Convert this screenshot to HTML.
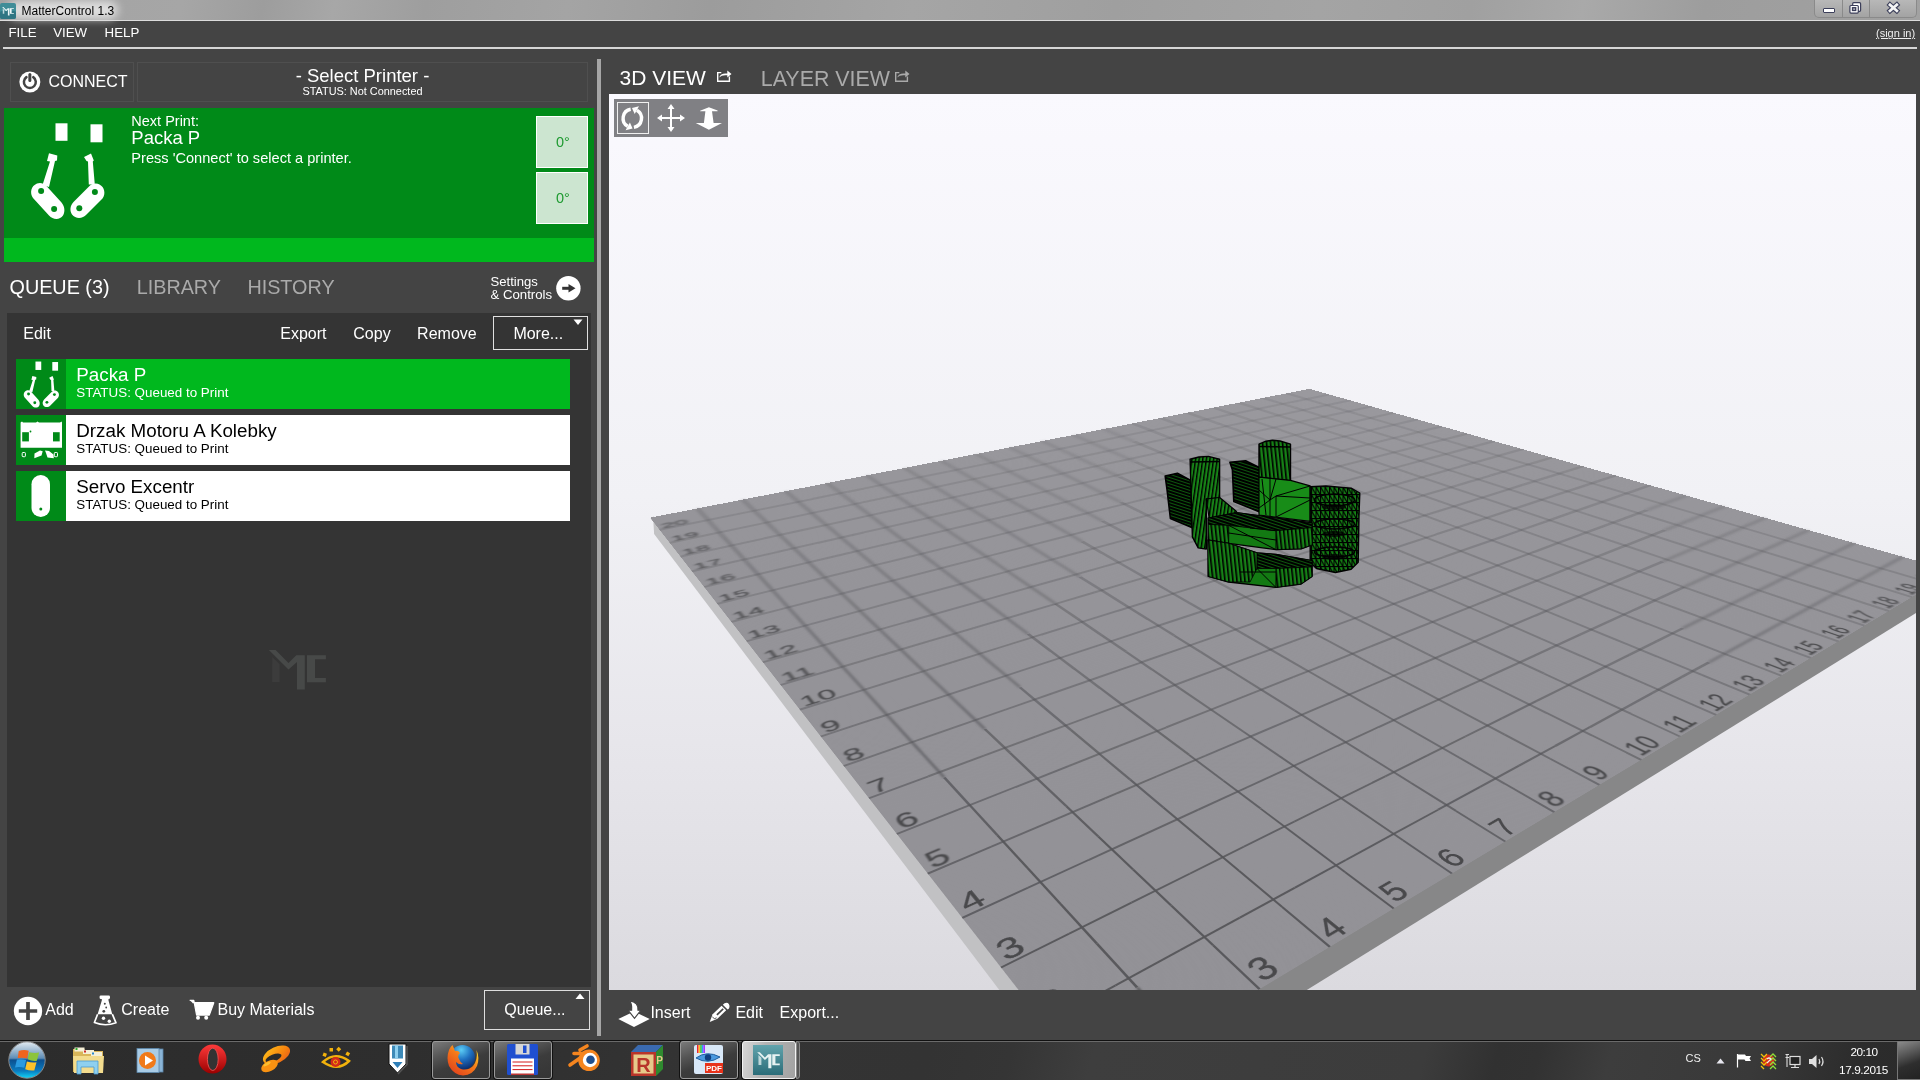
<!DOCTYPE html><html><head><meta charset="utf-8"><style>
*{margin:0;padding:0;box-sizing:border-box}
html,body{width:1920px;height:1080px;overflow:hidden}
body{background:#444;font-family:"Liberation Sans",sans-serif;position:relative;color:#fff}
.a{position:absolute;white-space:pre;line-height:1}
.t{position:absolute;white-space:pre;line-height:1}
svg{position:absolute;overflow:visible}
</style></head><body><div style="position:absolute;left:0;top:0;width:1920px;height:1080px;overflow:hidden;will-change:transform"><div class="a" style="left:0;top:0;width:1920px;height:20px;background:linear-gradient(100deg,#a3a3a3 0px,#a6a6a6 180px,#9d9d9d 260px,#a7a7a7 330px,#9e9e9e 420px,#a4a4a4 560px,#9c9c9c 700px,#a5a5a5 900px,#9f9f9f 1100px,#a4a4a4 1300px,#a0a0a0 1450px,#a9a9a9 1560px,#9d9d9d 1680px,#a2a2a2 1920px)"></div>
<div class="a" style="left:8px;top:1px;width:110px;height:18px;border-radius:9px;background:#dedede;filter:blur(4px)"></div>
<div class="a" style="left:0;top:20px;width:1920px;height:1px;background:#dcdcdc"></div>
<svg style="left:0;top:3px" width="17" height="16" viewBox="0 0 17 16"><rect x="0" y="0" width="16" height="16" rx="2" fill="#3f8d98"/><rect x="0" y="8" width="16" height="8" rx="2" fill="#2f7683"/></svg>
<svg style="left:2px;top:6.5px" width="12" height="8.5" viewBox="268.5 649.5 58 40.5" preserveAspectRatio="none"><g fill="#eef8f8"><path d="M272.2 657 L279.6 664.1 L279.6 681.9 L272.2 681.9 Z" fill-opacity="0.75"/><path d="M268.9 650 L275.6 650 L288.5 663 L296.3 655.2 L304.8 655.2 L304.8 689.6 L297 689.6 L297 661.9 L288.5 669.6 Z"/><path d="M307 655.2 L325.9 655.2 L325.9 659.3 L315 659.3 L315 678 L325.9 678 L325.9 682.2 L307 682.2 Z"/></g></svg>
<div class="t" style="left:21.5px;top:4.96px;font-size:12px;color:#000;">MatterControl 1.3</div>
<div class="a" style="left:1814px;top:-1px;width:103px;height:19px;border:1px solid #8a8a8a;border-top:none;border-radius:0 0 5px 5px;background:linear-gradient(#b9b9b9,#a3a3a3)"></div>
<div class="a" style="left:1842px;top:0;width:1px;height:17px;background:#8a8a8a"></div>
<div class="a" style="left:1869px;top:0;width:1px;height:17px;background:#8a8a8a"></div>
<div class="a" style="left:1823px;top:8px;width:12px;height:5px;background:#fff;border:1px solid #3c3f5a;border-radius:1px"></div>
<svg style="left:1840px;top:0" width="80" height="20" viewBox="1840 0 80 20">
<rect x="1852.7" y="2.7" width="7.9" height="8.6" rx="1" fill="#fff" stroke="#3c3f5a" stroke-width="1.2"/>
<rect x="1849.9" y="5.5" width="8.4" height="7.6" rx="1" fill="#fff" stroke="#3c3f5a" stroke-width="1.2"/>
<rect x="1852.6" y="7.8" width="3" height="2.6" fill="none" stroke="#3c3f5a" stroke-width="1.5"/>
<path d="M1890 4.8 L1896.8 10.8 M1896.8 4.8 L1890 10.8" stroke="#3c3f5a" stroke-width="5" stroke-linecap="square"/>
<path d="M1890 4.8 L1896.8 10.8 M1896.8 4.8 L1890 10.8" stroke="#f4f4f4" stroke-width="2.8" stroke-linecap="square"/>
</svg>
<div class="t" style="left:8.5px;top:25.99px;font-size:13.3px;color:#fff;">FILE</div>
<div class="t" style="left:53.2px;top:25.99px;font-size:13.3px;color:#fff;">VIEW</div>
<div class="t" style="left:104.6px;top:25.99px;font-size:13.3px;color:#fff;">HELP</div>
<div class="t" style="left:1876px;top:28.48px;font-size:11px;color:#eee;text-decoration:underline">(sign in)</div>
<div class="a" style="left:3px;top:47px;width:1914px;height:2px;background:#d6d6d6"></div>
<div class="a" style="left:10px;top:62px;width:124px;height:40px;border:1px solid #4f4f4f"></div>
<div class="a" style="left:137px;top:62px;width:451px;height:40px;border:1px solid #4f4f4f"></div>
<svg style="left:0;top:0" width="50" height="100" viewBox="0 0 50 100"><circle cx="29.85" cy="82" r="10.5" fill="#fff"/><path d="M26.44 77.13 A5.95 5.95 0 1 0 33.26 77.13" fill="none" stroke="#444" stroke-width="2.5" stroke-linecap="round"/><path d="M29.85 74.4 V80.6" stroke="#444" stroke-width="3" stroke-linecap="round"/></svg>
<div class="t" style="left:48.5px;top:73.88px;font-size:16px;color:#fff;">CONNECT</div>
<div class="t" style="left:137px;width:451px;top:66.58px;font-size:18.5px;text-align:center">- Select Printer -</div>
<div class="t" style="left:137px;width:451px;top:86.06px;font-size:10.9px;text-align:center">STATUS: Not Connected</div>
<div class="a" style="left:4px;top:108px;width:590px;height:130px;background:#008a18"></div>
<div class="a" style="left:4px;top:238px;width:590px;height:24px;background:#00b81e"></div>
<div class="t" style="left:131.3px;top:114.11px;font-size:14.5px;color:#fff;">Next Print:</div>
<div class="t" style="left:131.3px;top:128.53px;font-size:18.5px;color:#fff;">Packa P</div>
<div class="t" style="left:131.3px;top:150.93px;font-size:14.6px;color:#fff;">Press 'Connect' to select a printer.</div>
<div class="a" style="left:536px;top:116px;width:52px;height:52px;background:#cce5d0;border:1px solid #fff"></div>
<div class="t" style="left:556px;top:135.11px;font-size:14.5px;color:#1e9a30;">0°</div>
<div class="a" style="left:536px;top:172px;width:52px;height:52px;background:#cce5d0;border:1px solid #fff"></div>
<div class="t" style="left:556px;top:191.11px;font-size:14.5px;color:#1e9a30;">0°</div>
<svg style="left:0;top:0" width="120" height="240"><g fill="#fff">
<rect x="55.5" y="123.3" width="12" height="17.5"/>
<rect x="90.5" y="124.3" width="12" height="18"/>
<path d="M49 153.3 L57.3 155.5 L57 160.5 L55 161 L49 187 L42.5 185 L50 161.5 L47 161 Z"/>
<path d="M91 153.6 L84 157 L86.5 161 L88 161.5 L88.8 184.5 L94.8 184.5 L92.8 161.5 L93.8 160.5 Z"/>
<path d="M37 183.5 C31 186 29.5 193 33 198 L49 215.5 C53 220 60 220 63 215.5 C65.5 211.5 64.5 206 61.5 202.5 L46 185.5 C43.5 183 40 182.3 37 183.5 Z"/>
<path d="M99.5 184.5 C104.5 187 106 194 102.5 198.5 L86.5 214.5 C82.5 219 75.5 219 72 214.5 C69.5 211 70 205.5 73.5 202 L89.5 186 C92.5 183.3 96.5 183 99.5 184.5 Z"/>
</g>
<g fill="#008a18"><circle cx="41.1" cy="190.9" r="3"/><circle cx="54.1" cy="208.9" r="3"/><circle cx="94.9" cy="192" r="3"/><circle cx="79.3" cy="208.2" r="3"/></g></svg>
<div class="t" style="left:9.5px;top:278.46px;font-size:19.8px;color:#fff;">QUEUE (3)</div>
<div class="t" style="left:136.7px;top:278.46px;font-size:19.8px;color:#aaaaaa;">LIBRARY</div>
<div class="t" style="left:247.4px;top:278.46px;font-size:19.8px;color:#aaaaaa;">HISTORY</div>
<div class="t" style="left:490.5px;top:275.26px;font-size:13.1px;color:#fff;">Settings</div>
<div class="t" style="left:490.5px;top:287.98px;font-size:13.2px;color:#fff;">&amp; Controls</div>
<svg style="left:0;top:0" width="600" height="320"><circle cx="568.4" cy="288.25" r="12.2" fill="#fff"/><path d="M562.2 288.3 H570" stroke="#333" stroke-width="3"/><path d="M568.5 284 L575.5 288.3 L568.5 292.6 Z" fill="#333"/></svg>
<div class="a" style="left:7px;top:313px;width:584px;height:674px;background:#343434"></div>
<div class="t" style="left:23.3px;top:325.88px;font-size:16px;color:#fff;">Edit</div>
<div class="t" style="left:280.3px;top:325.88px;font-size:16px;color:#fff;">Export</div>
<div class="t" style="left:353.3px;top:325.88px;font-size:16px;color:#fff;">Copy</div>
<div class="t" style="left:417.1px;top:325.88px;font-size:16px;color:#fff;">Remove</div>
<div class="a" style="left:493px;top:316px;width:95px;height:34px;border:1px solid #e0e0e0"></div>
<div class="t" style="left:513.4px;top:325.88px;font-size:16px;color:#fff;">More...</div>
<svg style="left:573px;top:319px" width="10" height="7"><path d="M0.5 0.5 H9.5 L5 6 Z" fill="#fff"/></svg>
<div class="a" style="left:16px;top:359px;width:554px;height:50px;background:#00b81e"></div><div class="a" style="left:16px;top:359px;width:50px;height:50px;background:#008a18"></div><svg style="left:16px;top:359px" width="50" height="50" viewBox="26 118 82 104"><g transform="translate(0,0)"><g fill="#fff">
<rect x="55.5" y="123.3" width="12" height="17.5"/>
<rect x="90.5" y="124.3" width="12" height="18"/>
<path d="M49 153.3 L57.3 155.5 L57 160.5 L55 161 L49 187 L42.5 185 L50 161.5 L47 161 Z"/>
<path d="M91 153.6 L84 157 L86.5 161 L88 161.5 L88.8 184.5 L94.8 184.5 L92.8 161.5 L93.8 160.5 Z"/>
<path d="M37 183.5 C31 186 29.5 193 33 198 L49 215.5 C53 220 60 220 63 215.5 C65.5 211.5 64.5 206 61.5 202.5 L46 185.5 C43.5 183 40 182.3 37 183.5 Z"/>
<path d="M99.5 184.5 C104.5 187 106 194 102.5 198.5 L86.5 214.5 C82.5 219 75.5 219 72 214.5 C69.5 211 70 205.5 73.5 202 L89.5 186 C92.5 183.3 96.5 183 99.5 184.5 Z"/>
</g>
<g fill="#008a18"><circle cx="41.1" cy="190.9" r="3"/><circle cx="54.1" cy="208.9" r="3"/><circle cx="94.9" cy="192" r="3"/><circle cx="79.3" cy="208.2" r="3"/></g></g></svg><div class="t" style="left:76.3px;top:366.28px;font-size:18.8px;color:#fff;">Packa P</div><div class="t" style="left:76.3px;top:386.21px;font-size:13.4px;color:#fff;">STATUS: Queued to Print</div>
<div class="a" style="left:16px;top:415px;width:554px;height:50px;background:#ffffff"></div><div class="a" style="left:16px;top:415px;width:50px;height:50px;background:#008a18"></div><svg style="left:16px;top:415px" width="50" height="50" viewBox="0 0 50 50">
<path d="M4.6 7.4 L6 6.5 L7 7.4 L20 7.4 L21.5 6.6 L23 7.4 L44 7.4 L45.5 6.5 L46 7.4 V32.8 H4.6 Z" fill="#fff"/>
<rect x="6.2" y="17.2" width="6.7" height="9.2" fill="#008a18"/><rect x="37" y="17.2" width="6.7" height="9.2" fill="#008a18"/>
<circle cx="14.5" cy="16.5" r="0.9" fill="#008a18"/>
<rect x="6.2" y="37.5" width="3.2" height="4.2" rx="0.8" fill="none" stroke="#fff" stroke-width="1"/>
<rect x="38.3" y="37.5" width="3.2" height="4.2" rx="0.8" fill="none" stroke="#fff" stroke-width="1"/>
<path d="M18.3 43.2 L18.5 38.5 L24 35.5 L26.7 36.2 L25.5 40.5 Z" fill="#fff"/><path d="M29 35.5 L33 36 L37.5 39.5 L37.8 43.2 L31.5 42.5 L30 38 Z" fill="#fff"/>
</svg><div class="t" style="left:76.3px;top:422.28px;font-size:18.8px;color:#000;">Drzak Motoru A Kolebky</div><div class="t" style="left:76.3px;top:442.21px;font-size:13.4px;color:#000;">STATUS: Queued to Print</div>
<div class="a" style="left:16px;top:471px;width:554px;height:50px;background:#ffffff"></div><div class="a" style="left:16px;top:471px;width:50px;height:50px;background:#008a18"></div><svg style="left:16px;top:471px" width="50" height="50" viewBox="0 0 50 50">
<rect x="15.5" y="4" width="18.5" height="42" rx="9.2" fill="#fff"/><circle cx="24.8" cy="38" r="1.5" fill="#008a18"/>
</svg><div class="t" style="left:76.3px;top:478.28px;font-size:18.8px;color:#000;">Servo Excentr</div><div class="t" style="left:76.3px;top:498.21px;font-size:13.4px;color:#000;">STATUS: Queued to Print</div>
<svg style="left:0;top:0" width="340" height="700">
<path d="M272.2 657 L279.6 664.1 L279.6 681.9 L272.2 681.9 Z" fill="#3c3c3c"/>
<path d="M268.9 650 L275.6 650 L288.5 663 L296.3 655.2 L304.8 655.2 L304.8 689.6 L297 689.6 L297 661.9 L288.5 669.6 Z" fill="#474948"/>
<path d="M307 655.2 L325.9 655.2 L325.9 659.3 L315 659.3 L315 678 L325.9 678 L325.9 682.2 L307 682.2 Z" fill="#474948"/>
</svg>
<svg style="left:12.6px;top:996px" width="30" height="30" viewBox="0 0 30 30"><circle cx="15" cy="15" r="14.2" fill="#fff"/><path d="M15 6 V24 M5.8 15 H24.2" stroke="#444" stroke-width="3.7"/></svg>
<div class="t" style="left:45.3px;top:1001.88px;font-size:16px;color:#fff;">Add</div>
<svg style="left:0;top:0" width="230" height="1035" viewBox="0 0 230 1035">
<rect x="99.6" y="995.6" width="10.4" height="3.4" rx="1.2" fill="#fff"/>
<path d="M101.8 998.5 H108.5 V1000.5 L112.3 1014.2 H97.6 L101.8 1000.5 Z" fill="#fff"/>
<path d="M97.6 1014.2 L94.4 1022.5 Q105 1026.8 116 1022.8 L112.3 1014.2" fill="none" stroke="#fff" stroke-width="1.7" stroke-linejoin="round"/>
<circle cx="104.8" cy="1003.7" r="1" fill="#444"/><circle cx="106.2" cy="1007.5" r="0.9" fill="#444"/><circle cx="103.8" cy="1011.3" r="1.4" fill="#444"/>
<circle cx="103.5" cy="1018.2" r="1.7" fill="#fff"/><circle cx="109.3" cy="1021.3" r="1.7" fill="#fff"/>
<path d="M189.7 1000.3 H193.8 L196.6 1015.1 H209.3 L213.8 1002.7 H192.5" fill="#fff" stroke="#fff" stroke-width="1.2" stroke-linejoin="round"/>
<circle cx="198" cy="1017.8" r="2" fill="#fff"/><circle cx="206.2" cy="1017.8" r="2" fill="#fff"/>
</svg>
<div class="t" style="left:121.3px;top:1001.88px;font-size:16px;color:#fff;">Create</div>
<div class="t" style="left:217.5px;top:1001.88px;font-size:16px;color:#fff;">Buy Materials</div>
<div class="a" style="left:484px;top:990px;width:106px;height:40px;border:1px solid #dedede"></div>
<div class="t" style="left:504.2px;top:1002.38px;font-size:16px;color:#fff;">Queue...</div>
<svg style="left:575px;top:993px" width="10" height="7"><path d="M0.5 6 H9.5 L5 0.5 Z" fill="#fff"/></svg>
<div class="a" style="left:597px;top:59px;width:4px;height:977px;background:#a6a6a6"></div>
<div class="t" style="left:619.5px;top:67.38px;font-size:21px;color:#fff;">3D VIEW</div>
<div class="t" style="left:760.8px;top:68.85px;font-size:21.4px;color:#aaaaaa;">LAYER VIEW</div>
<svg style="left:717px;top:69.6px" width="16" height="13" viewBox="0 0 16 13"><path d="M4.3 2.6 H0.7 V11.3 H12.4 V6.6" fill="none" stroke="#fff" stroke-width="1.4"/><path d="M2.2 7.6 Q3.5 3.3 8.6 3.4 L10.3 3.4 L10.3 0.4 L14.5 3.9 L10.3 7.5 L10.3 5.3 L8.6 5.3 Q4.5 5.2 2.2 7.6 Z" fill="#fff"/></svg>
<svg style="left:895px;top:69.6px" width="16" height="13" viewBox="0 0 16 13"><path d="M4.3 2.6 H0.7 V11.3 H12.4 V6.6" fill="none" stroke="#aaaaaa" stroke-width="1.4"/><path d="M2.2 7.6 Q3.5 3.3 8.6 3.4 L10.3 3.4 L10.3 0.4 L14.5 3.9 L10.3 7.5 L10.3 5.3 L8.6 5.3 Q4.5 5.2 2.2 7.6 Z" fill="#aaaaaa"/></svg>
<div class="a" style="left:609px;top:94px;width:1307px;height:896px;overflow:hidden;background:linear-gradient(#faf9fe 0%,#f1f1f5 45%,#e6e5ea 75%,#dbdadf 100%)"><svg style="left:0;top:0" width="1307" height="896"><polygon points="44.00,422.10 45.10,440.00 488.40,1025.60 489.00,991.50" fill="#c1c1c3"/><polygon points="486.00,991.50 488.40,1025.60 1351.00,491.75 1345.60,475.00" fill="#878788"/><polygon points="43.50,424.10 700.50,297.00 1342.60,477.50 486.00,991.00" fill="#949398"/></svg><div class="a" style="left:0;top:0;width:2000px;height:2000px;transform-origin:0 0;transform:matrix3d(0.49396048,0.00474350,0,0.0002344999,0.08033936,-0.00551094,0,-0.0002924296,0,0,1,0,41.080434,423.669994,0,1.00000000)"><svg width="2000" height="2000" viewBox="0 0 2000 2000" style="left:0;top:0"><defs><linearGradient id="pg" x1="1" y1="0" x2="0" y2="1"><stop offset="0" stop-color="#9a999e"/><stop offset="1" stop-color="#929196"/></linearGradient></defs><rect width="2000" height="2000" fill="url(#pg)"/><g font-family="Liberation Sans" font-size="48" fill="#48484c" stroke="#48484c" stroke-width="0.4"><defs><filter id="lb2_8" x="-20%" y="-20%" width="140%" height="140%"><feGaussianBlur stdDeviation="0.42"/></filter><filter id="lb2_108" x="-20%" y="-20%" width="140%" height="140%"><feGaussianBlur stdDeviation="0.33"/></filter><filter id="lb3_8" x="-20%" y="-20%" width="140%" height="140%"><feGaussianBlur stdDeviation="0.56"/></filter><filter id="lb3_208" x="-20%" y="-20%" width="140%" height="140%"><feGaussianBlur stdDeviation="0.36"/></filter><filter id="lb4_8" x="-20%" y="-20%" width="140%" height="140%"><feGaussianBlur stdDeviation="0.70"/></filter><filter id="lb4_308" x="-20%" y="-20%" width="140%" height="140%"><feGaussianBlur stdDeviation="0.40"/></filter><filter id="lb5_8" x="-20%" y="-20%" width="140%" height="140%"><feGaussianBlur stdDeviation="0.85"/></filter><filter id="lb5_408" x="-20%" y="-20%" width="140%" height="140%"><feGaussianBlur stdDeviation="0.50"/></filter><filter id="lb6_8" x="-20%" y="-20%" width="140%" height="140%"><feGaussianBlur stdDeviation="1.01"/></filter><filter id="lb6_508" x="-20%" y="-20%" width="140%" height="140%"><feGaussianBlur stdDeviation="0.60"/></filter><filter id="lb7_8" x="-20%" y="-20%" width="140%" height="140%"><feGaussianBlur stdDeviation="1.18"/></filter><filter id="lb7_608" x="-20%" y="-20%" width="140%" height="140%"><feGaussianBlur stdDeviation="0.70"/></filter><filter id="lb8_8" x="-20%" y="-20%" width="140%" height="140%"><feGaussianBlur stdDeviation="1.36"/></filter><filter id="lb8_708" x="-20%" y="-20%" width="140%" height="140%"><feGaussianBlur stdDeviation="0.81"/></filter><filter id="lb9_8" x="-20%" y="-20%" width="140%" height="140%"><feGaussianBlur stdDeviation="1.54"/></filter><filter id="lb9_808" x="-20%" y="-20%" width="140%" height="140%"><feGaussianBlur stdDeviation="0.93"/></filter><filter id="lb10_8" x="-20%" y="-20%" width="140%" height="140%"><feGaussianBlur stdDeviation="1.74"/></filter><filter id="lb10_908" x="-20%" y="-20%" width="140%" height="140%"><feGaussianBlur stdDeviation="1.04"/></filter><filter id="lb11_8" x="-20%" y="-20%" width="140%" height="140%"><feGaussianBlur stdDeviation="1.94"/></filter><filter id="lb11_1008" x="-20%" y="-20%" width="140%" height="140%"><feGaussianBlur stdDeviation="1.17"/></filter><filter id="lb12_8" x="-20%" y="-20%" width="140%" height="140%"><feGaussianBlur stdDeviation="2.15"/></filter><filter id="lb12_1108" x="-20%" y="-20%" width="140%" height="140%"><feGaussianBlur stdDeviation="1.29"/></filter><filter id="lb13_8" x="-20%" y="-20%" width="140%" height="140%"><feGaussianBlur stdDeviation="2.37"/></filter><filter id="lb13_1208" x="-20%" y="-20%" width="140%" height="140%"><feGaussianBlur stdDeviation="1.42"/></filter><filter id="lb14_8" x="-20%" y="-20%" width="140%" height="140%"><feGaussianBlur stdDeviation="2.60"/></filter><filter id="lb14_1308" x="-20%" y="-20%" width="140%" height="140%"><feGaussianBlur stdDeviation="1.56"/></filter><filter id="lb15_8" x="-20%" y="-20%" width="140%" height="140%"><feGaussianBlur stdDeviation="2.83"/></filter><filter id="lb15_1408" x="-20%" y="-20%" width="140%" height="140%"><feGaussianBlur stdDeviation="1.70"/></filter><filter id="lb16_8" x="-20%" y="-20%" width="140%" height="140%"><feGaussianBlur stdDeviation="3.07"/></filter><filter id="lb16_1508" x="-20%" y="-20%" width="140%" height="140%"><feGaussianBlur stdDeviation="1.85"/></filter><filter id="lb17_8" x="-20%" y="-20%" width="140%" height="140%"><feGaussianBlur stdDeviation="3.33"/></filter><filter id="lb17_1608" x="-20%" y="-20%" width="140%" height="140%"><feGaussianBlur stdDeviation="1.99"/></filter><filter id="lb18_8" x="-20%" y="-20%" width="140%" height="140%"><feGaussianBlur stdDeviation="3.59"/></filter><filter id="lb18_1708" x="-20%" y="-20%" width="140%" height="140%"><feGaussianBlur stdDeviation="2.15"/></filter><filter id="lb19_8" x="-20%" y="-20%" width="140%" height="140%"><feGaussianBlur stdDeviation="3.86"/></filter><filter id="lb19_1808" x="-20%" y="-20%" width="140%" height="140%"><feGaussianBlur stdDeviation="2.31"/></filter><filter id="lb20_8" x="-20%" y="-20%" width="140%" height="140%"><feGaussianBlur stdDeviation="4.13"/></filter><filter id="lb20_1908" x="-20%" y="-20%" width="140%" height="140%"><feGaussianBlur stdDeviation="2.47"/></filter></defs><text x="8" y="1995">1</text><text x="8" y="1995">1</text><text x="8" y="1895" filter="url(#lb2_8)">2</text><text x="108" y="1995" filter="url(#lb2_108)">2</text><text x="8" y="1795" filter="url(#lb3_8)">3</text><text x="208" y="1995" filter="url(#lb3_208)">3</text><text x="8" y="1695" filter="url(#lb4_8)">4</text><text x="308" y="1995" filter="url(#lb4_308)">4</text><text x="8" y="1595" filter="url(#lb5_8)">5</text><text x="408" y="1995" filter="url(#lb5_408)">5</text><text x="8" y="1495" filter="url(#lb6_8)">6</text><text x="508" y="1995" filter="url(#lb6_508)">6</text><text x="8" y="1395" filter="url(#lb7_8)">7</text><text x="608" y="1995" filter="url(#lb7_608)">7</text><text x="8" y="1295" filter="url(#lb8_8)">8</text><text x="708" y="1995" filter="url(#lb8_708)">8</text><text x="8" y="1195" filter="url(#lb9_8)">9</text><text x="808" y="1995" filter="url(#lb9_808)">9</text><text x="8" y="1095" filter="url(#lb10_8)">10</text><text x="908" y="1995" filter="url(#lb10_908)">10</text><text x="8" y="995" filter="url(#lb11_8)">11</text><text x="1008" y="1995" filter="url(#lb11_1008)">11</text><text x="8" y="895" filter="url(#lb12_8)">12</text><text x="1108" y="1995" filter="url(#lb12_1108)">12</text><text x="8" y="795" filter="url(#lb13_8)">13</text><text x="1208" y="1995" filter="url(#lb13_1208)">13</text><text x="8" y="695" filter="url(#lb14_8)">14</text><text x="1308" y="1995" filter="url(#lb14_1308)">14</text><text x="8" y="595" filter="url(#lb15_8)">15</text><text x="1408" y="1995" filter="url(#lb15_1408)">15</text><text x="8" y="495" filter="url(#lb16_8)">16</text><text x="1508" y="1995" filter="url(#lb16_1508)">16</text><text x="8" y="395" filter="url(#lb17_8)">17</text><text x="1608" y="1995" filter="url(#lb17_1608)">17</text><text x="8" y="295" filter="url(#lb18_8)">18</text><text x="1708" y="1995" filter="url(#lb18_1708)">18</text><text x="8" y="195" filter="url(#lb19_8)">19</text><text x="1808" y="1995" filter="url(#lb19_1808)">19</text><text x="8" y="95" filter="url(#lb20_8)">20</text><text x="1908" y="1995" filter="url(#lb20_1908)">20</text></g></svg></div><svg style="left:0;top:0" width="1307" height="896"><g fill="#56565a" style="filter:blur(0.45px)"><polygon points="334.09,683.92 359.48,711.65 362.07,710.63 336.62,682.97" fill-opacity="0.771"/><polygon points="359.59,711.61 387.20,741.75 389.63,740.73 361.96,710.67" fill-opacity="0.842"/><polygon points="387.30,741.71 417.42,774.59 419.70,773.57 389.52,740.78" fill-opacity="0.925"/><polygon points="417.45,774.58 450.44,810.59 452.71,809.51 419.67,773.59" fill-opacity="0.950"/><polygon points="450.44,810.59 486.73,850.21 489.06,849.01 452.71,809.51" fill-opacity="0.950"/><polygon points="486.73,850.21 526.84,894.01 529.24,892.68 489.06,849.01" fill-opacity="0.950"/><polygon points="49.94,435.02 90.44,426.85 91.89,428.48 51.25,436.71" fill-opacity="0.212"/><polygon points="90.42,426.84 129.36,418.98 130.97,420.58 91.91,428.49" fill-opacity="0.208"/><polygon points="129.34,418.97 166.80,411.41 168.56,412.98 130.98,420.59" fill-opacity="0.204"/><polygon points="166.78,411.40 202.85,404.13 204.75,405.66 168.58,412.99" fill-opacity="0.200"/><polygon points="202.83,404.11 237.58,397.10 239.62,398.61 204.77,405.67" fill-opacity="0.196"/><polygon points="237.56,397.09 271.06,390.33 273.23,391.82 239.64,398.63" fill-opacity="0.193"/><polygon points="271.04,390.32 303.36,383.80 305.66,385.26 273.25,391.83" fill-opacity="0.189"/><polygon points="303.34,383.79 334.54,377.50 336.97,378.93 305.68,385.27" fill-opacity="0.186"/><polygon points="334.52,377.49 364.66,371.41 367.21,372.82 336.99,378.94" fill-opacity="0.183"/><polygon points="364.63,371.40 393.76,365.53 396.43,366.91 367.23,372.83" fill-opacity="0.180"/><polygon points="393.74,365.51 421.91,359.84 424.69,361.20 396.45,366.92" fill-opacity="0.177"/><polygon points="421.89,359.82 449.15,354.33 452.04,355.67 424.71,361.21" fill-opacity="0.174"/><polygon points="449.12,354.32 475.51,349.00 478.51,350.32 452.06,355.68" fill-opacity="0.171"/><polygon points="475.49,348.99 501.05,343.83 504.15,345.13 478.53,350.33" fill-opacity="0.168"/><polygon points="501.03,343.82 525.80,338.83 529.00,340.11 504.17,345.14" fill-opacity="0.166"/><polygon points="525.78,338.82 549.80,333.98 553.09,335.24 529.02,340.12" fill-opacity="0.163"/><polygon points="549.77,333.97 573.07,329.27 576.46,330.51 553.11,335.25" fill-opacity="0.161"/><polygon points="573.05,329.27 595.66,324.71 599.13,325.93 576.48,330.52" fill-opacity="0.158"/><polygon points="595.63,324.70 617.59,320.27 621.15,321.48 599.16,325.94" fill-opacity="0.156"/><polygon points="617.56,320.27 638.89,315.97 642.54,317.15 621.18,321.49" fill-opacity="0.154"/><polygon points="638.86,315.96 659.58,311.78 663.32,312.95 642.56,317.16" fill-opacity="0.151"/><polygon points="659.55,311.77 679.70,307.71 683.52,308.87 663.35,312.96" fill-opacity="0.149"/><polygon points="679.65,307.70 699.24,303.75 703.19,304.91 683.58,308.89" fill-opacity="0.145"/><polygon points="699.18,303.73 718.24,299.89 722.33,301.05 703.25,304.92" fill-opacity="0.141"/><polygon points="374.63,635.59 399.66,659.37 402.35,658.36 377.26,634.65" fill-opacity="0.669"/><polygon points="399.77,659.33 426.81,685.00 429.35,684.00 402.25,658.40" fill-opacity="0.727"/><polygon points="426.91,684.96 456.22,712.78 458.60,711.78 429.24,684.04" fill-opacity="0.792"/><polygon points="456.32,712.74 488.18,742.98 490.41,741.99 458.50,711.83" fill-opacity="0.865"/><polygon points="488.28,742.94 523.05,775.94 525.13,774.94 490.32,742.03" fill-opacity="0.949"/><polygon points="523.05,775.94 561.14,812.08 563.27,810.99 525.13,774.94" fill-opacity="0.950"/><polygon points="561.14,812.08 603.05,851.85 605.22,850.65 563.27,810.99" fill-opacity="0.950"/><polygon points="603.05,851.85 649.38,895.82 651.59,894.49 605.22,850.65" fill-opacity="0.950"/><polygon points="60.04,447.98 101.57,439.30 103.02,440.91 61.36,449.66" fill-opacity="0.226"/><polygon points="101.56,439.28 141.44,430.94 143.04,432.53 103.04,440.93" fill-opacity="0.221"/><polygon points="141.42,430.93 179.74,422.92 181.49,424.47 143.05,432.55" fill-opacity="0.217"/><polygon points="179.72,422.90 216.58,415.20 218.47,416.73 181.51,424.49" fill-opacity="0.213"/><polygon points="216.56,415.19 252.03,407.77 254.06,409.27 218.49,416.74" fill-opacity="0.209"/><polygon points="252.01,407.76 286.17,400.62 288.33,402.09 254.08,409.29" fill-opacity="0.205"/><polygon points="286.15,400.61 319.08,393.73 321.36,395.17 288.35,402.10" fill-opacity="0.201"/><polygon points="319.05,393.71 350.81,387.08 353.22,388.50 321.38,395.18" fill-opacity="0.197"/><polygon points="350.79,387.07 381.43,380.66 383.96,382.06 353.24,388.51" fill-opacity="0.194"/><polygon points="381.41,380.65 411.00,374.47 413.65,375.84 383.98,382.07" fill-opacity="0.191"/><polygon points="410.98,374.46 439.58,368.48 442.33,369.83 413.67,375.85" fill-opacity="0.187"/><polygon points="439.55,368.47 467.20,362.69 470.06,364.02 442.35,369.84" fill-opacity="0.184"/><polygon points="467.17,362.68 493.92,357.10 496.88,358.40 470.08,364.03" fill-opacity="0.181"/><polygon points="493.89,357.09 519.78,351.68 522.84,352.96 496.90,358.41" fill-opacity="0.178"/><polygon points="519.75,351.67 544.82,346.43 547.98,347.70 522.86,352.97" fill-opacity="0.175"/><polygon points="544.79,346.42 569.08,341.35 572.33,342.59 548.00,347.71" fill-opacity="0.173"/><polygon points="569.05,341.34 592.59,336.42 595.94,337.65 572.36,342.60" fill-opacity="0.170"/><polygon points="592.57,336.41 615.40,331.64 618.83,332.85 595.96,337.66" fill-opacity="0.167"/><polygon points="615.37,331.64 637.53,327.01 641.04,328.20 618.86,332.86" fill-opacity="0.165"/><polygon points="637.50,327.00 659.00,322.51 662.61,323.68 641.07,328.21" fill-opacity="0.162"/><polygon points="658.98,322.50 679.86,318.14 683.54,319.30 662.63,323.69" fill-opacity="0.160"/><polygon points="679.80,318.12 700.09,313.89 703.91,315.04 683.60,319.31" fill-opacity="0.155"/><polygon points="700.04,313.87 719.76,309.75 723.71,310.91 703.97,315.06" fill-opacity="0.151"/><polygon points="719.70,309.73 738.87,305.73 742.97,306.89 723.77,310.93" fill-opacity="0.147"/><polygon points="409.65,593.82 434.18,614.43 436.98,613.43 412.39,592.89" fill-opacity="0.586"/><polygon points="434.28,614.39 460.64,636.53 463.29,635.54 436.88,613.47" fill-opacity="0.632"/><polygon points="460.74,636.49 489.13,660.34 491.63,659.35 463.19,635.58" fill-opacity="0.684"/><polygon points="489.23,660.30 519.91,686.06 522.26,685.07 491.53,659.39" fill-opacity="0.742"/><polygon points="520.00,686.02 553.25,713.93 555.45,712.94 522.16,685.11" fill-opacity="0.807"/><polygon points="553.34,713.88 589.49,744.23 591.55,743.24 555.36,712.98" fill-opacity="0.881"/><polygon points="589.56,744.19 629.01,777.30 630.96,776.30 591.47,743.28" fill-opacity="0.950"/><polygon points="629.01,777.30 672.24,813.58 674.22,812.48 630.96,776.30" fill-opacity="0.950"/><polygon points="672.24,813.58 719.81,853.50 721.81,852.29 674.22,812.48" fill-opacity="0.950"/><polygon points="70.80,461.76 113.41,452.52 114.85,454.13 72.11,463.44" fill-opacity="0.241"/><polygon points="113.39,452.50 154.26,443.64 155.85,445.22 114.86,454.15" fill-opacity="0.236"/><polygon points="154.24,443.62 193.46,435.12 195.20,436.66 155.87,445.23" fill-opacity="0.232"/><polygon points="193.44,435.10 231.12,426.93 233.00,428.45 195.22,436.68" fill-opacity="0.227"/><polygon points="231.10,426.92 267.32,419.06 269.33,420.55 233.01,428.46" fill-opacity="0.222"/><polygon points="267.30,419.05 302.14,411.49 304.29,412.95 269.35,420.56" fill-opacity="0.218"/><polygon points="302.12,411.48 335.67,404.20 337.94,405.63 304.31,412.96" fill-opacity="0.214"/><polygon points="335.65,404.19 367.97,397.18 370.36,398.59 337.96,405.65" fill-opacity="0.210"/><polygon points="367.95,397.17 399.11,390.41 401.62,391.79 370.38,398.60" fill-opacity="0.206"/><polygon points="399.09,390.40 429.15,383.88 431.77,385.24 401.64,391.81" fill-opacity="0.203"/><polygon points="429.13,383.87 458.15,377.58 460.88,378.91 431.80,385.25" fill-opacity="0.199"/><polygon points="458.13,377.56 486.17,371.49 489.00,372.80 460.91,378.92" fill-opacity="0.196"/><polygon points="486.14,371.47 513.24,365.60 516.17,366.89 489.02,372.81" fill-opacity="0.192"/><polygon points="513.22,365.59 539.42,359.91 542.45,361.18 516.20,366.90" fill-opacity="0.189"/><polygon points="539.40,359.90 564.75,354.40 567.88,355.65 542.48,361.19" fill-opacity="0.186"/><polygon points="564.73,354.39 589.28,349.07 592.50,350.30 567.90,355.66" fill-opacity="0.183"/><polygon points="589.25,349.06 613.03,343.91 616.34,345.12 592.52,350.31" fill-opacity="0.180"/><polygon points="613.01,343.90 636.05,338.90 639.44,340.09 616.36,345.13" fill-opacity="0.177"/><polygon points="636.03,338.89 658.37,334.05 661.85,335.22 639.47,340.10" fill-opacity="0.175"/><polygon points="658.34,334.04 680.02,329.34 683.58,330.50 661.87,335.23" fill-opacity="0.172"/><polygon points="679.97,329.33 701.00,324.77 704.69,325.93 683.63,330.52" fill-opacity="0.167"/><polygon points="700.95,324.75 721.37,320.33 725.19,321.48 704.75,325.94" fill-opacity="0.162"/><polygon points="721.31,320.31 741.15,316.01 745.11,317.17 725.25,321.50" fill-opacity="0.157"/><polygon points="741.09,315.99 760.37,311.82 764.47,312.98 745.17,317.19" fill-opacity="0.153"/><polygon points="417.67,540.49 440.11,557.39 443.18,556.40 420.68,539.56" fill-opacity="0.482"/><polygon points="440.21,557.36 464.15,575.39 467.07,574.41 443.07,556.43" fill-opacity="0.516"/><polygon points="464.25,575.36 489.86,594.64 492.63,593.66 466.97,574.44" fill-opacity="0.554"/><polygon points="489.96,594.61 517.40,615.27 520.02,614.29 492.53,593.69" fill-opacity="0.596"/><polygon points="517.50,615.24 546.99,637.44 549.46,636.46 519.93,614.33" fill-opacity="0.642"/><polygon points="547.08,637.40 578.85,661.32 581.18,660.34 549.37,636.50" fill-opacity="0.694"/><polygon points="578.94,661.28 613.27,687.12 615.46,686.14 581.09,660.38" fill-opacity="0.752"/><polygon points="613.36,687.08 650.57,715.07 652.62,714.10 615.38,686.18" fill-opacity="0.816"/><polygon points="650.64,715.04 691.11,745.48 693.03,744.50 652.54,714.13" fill-opacity="0.882"/><polygon points="691.15,745.46 735.32,778.68 737.18,777.65 692.99,744.52" fill-opacity="0.921"/><polygon points="735.34,778.67 783.74,815.08 785.57,813.98 737.15,777.67" fill-opacity="0.950"/><polygon points="82.26,476.46 126.01,466.60 127.44,468.20 83.57,478.13" fill-opacity="0.259"/><polygon points="126.00,466.58 167.89,457.14 169.47,458.71 127.46,468.22" fill-opacity="0.253"/><polygon points="167.87,457.12 208.03,448.07 209.76,449.61 169.49,458.73" fill-opacity="0.248"/><polygon points="208.01,448.06 246.54,439.37 248.41,440.88 209.78,449.63" fill-opacity="0.243"/><polygon points="246.52,439.36 283.52,431.02 285.52,432.50 248.43,440.90" fill-opacity="0.238"/><polygon points="283.50,431.01 319.05,423.00 321.17,424.44 285.54,432.51" fill-opacity="0.233"/><polygon points="319.02,422.98 353.21,415.28 355.46,416.70 321.19,424.46" fill-opacity="0.228"/><polygon points="353.19,415.27 386.10,407.85 388.47,409.25 355.49,416.71" fill-opacity="0.224"/><polygon points="386.07,407.84 417.77,400.70 420.25,402.07 388.49,409.26" fill-opacity="0.220"/><polygon points="417.74,400.68 448.29,393.80 450.88,395.15 420.27,402.08" fill-opacity="0.216"/><polygon points="448.27,393.79 477.72,387.15 480.42,388.47 450.90,395.16" fill-opacity="0.212"/><polygon points="477.70,387.14 506.13,380.74 508.93,382.04 480.45,388.49" fill-opacity="0.208"/><polygon points="506.11,380.73 533.56,374.54 536.46,375.82 508.96,382.05" fill-opacity="0.205"/><polygon points="533.53,374.53 560.06,368.56 563.06,369.81 536.48,375.83" fill-opacity="0.201"/><polygon points="560.04,368.54 585.68,362.77 588.77,364.00 563.08,369.82" fill-opacity="0.198"/><polygon points="585.66,362.76 610.47,357.17 613.65,358.38 588.80,364.01" fill-opacity="0.195"/><polygon points="610.44,357.16 634.46,351.75 637.72,352.95 613.67,358.39" fill-opacity="0.191"/><polygon points="634.43,351.74 657.68,346.50 661.03,347.68 637.75,352.96" fill-opacity="0.188"/><polygon points="657.66,346.50 680.19,341.42 683.62,342.58 661.06,347.69" fill-opacity="0.185"/><polygon points="680.14,341.40 701.98,336.49 705.53,337.64 683.67,342.60" fill-opacity="0.180"/><polygon points="701.92,336.47 723.11,331.70 726.79,332.86 705.59,337.66" fill-opacity="0.175"/><polygon points="723.05,331.68 743.60,327.05 747.42,328.21 726.85,332.87" fill-opacity="0.169"/><polygon points="743.54,327.04 763.49,322.54 767.45,323.70 747.48,328.23" fill-opacity="0.164"/><polygon points="763.43,322.53 782.80,318.17 786.91,319.33 767.52,323.72" fill-opacity="0.159"/><polygon points="445.07,510.31 467.01,525.29 470.20,524.30 448.21,509.38" fill-opacity="0.429"/><polygon points="467.11,525.25 490.42,541.17 493.46,540.19 470.10,524.33" fill-opacity="0.457"/><polygon points="490.52,541.14 515.35,558.09 518.24,557.11 493.37,540.22" fill-opacity="0.489"/><polygon points="515.45,558.05 541.94,576.14 544.69,575.16 518.15,557.14" fill-opacity="0.523"/><polygon points="542.04,576.10 570.38,595.44 572.98,594.46 544.60,575.19" fill-opacity="0.561"/><polygon points="570.47,595.40 600.84,616.12 603.30,615.15 572.89,594.50" fill-opacity="0.603"/><polygon points="600.93,616.09 633.57,638.35 635.89,637.38 603.21,615.19" fill-opacity="0.649"/><polygon points="633.66,638.32 668.83,662.30 671.01,661.33 635.81,637.42" fill-opacity="0.699"/><polygon points="668.91,662.27 706.91,688.18 708.96,687.21 670.93,661.37" fill-opacity="0.755"/><polygon points="706.96,688.16 748.16,716.25 750.13,715.24 708.91,687.23" fill-opacity="0.793"/><polygon points="748.20,716.23 793.01,746.77 794.91,745.72 750.09,715.26" fill-opacity="0.827"/><polygon points="793.05,746.75 841.96,780.09 843.79,778.99 794.87,745.74" fill-opacity="0.864"/><polygon points="94.52,492.17 139.46,481.62 140.88,483.22 95.82,493.83" fill-opacity="0.278"/><polygon points="139.44,481.61 182.42,471.53 183.99,473.08 140.90,483.24" fill-opacity="0.271"/><polygon points="182.40,471.51 223.54,461.86 225.25,463.39 184.01,473.10" fill-opacity="0.266"/><polygon points="223.52,461.84 262.93,452.60 264.79,454.09 225.27,463.40" fill-opacity="0.260"/><polygon points="262.91,452.58 300.71,443.72 302.70,445.18 264.81,454.11" fill-opacity="0.254"/><polygon points="300.69,443.70 336.97,435.20 339.08,436.63 302.72,445.20" fill-opacity="0.249"/><polygon points="336.95,435.18 371.79,427.01 374.02,428.42 339.10,436.65" fill-opacity="0.244"/><polygon points="371.77,427.00 405.27,419.14 407.62,420.52 374.05,428.43" fill-opacity="0.240"/><polygon points="405.25,419.13 437.48,411.57 439.94,412.92 407.64,420.53" fill-opacity="0.235"/><polygon points="437.46,411.56 468.49,404.28 471.05,405.61 439.96,412.94" fill-opacity="0.231"/><polygon points="468.47,404.27 498.36,397.26 501.03,398.56 471.08,405.62" fill-opacity="0.226"/><polygon points="498.34,397.25 527.17,390.49 529.93,391.77 501.06,398.58" fill-opacity="0.222"/><polygon points="527.14,390.48 554.95,383.96 557.82,385.22 529.96,391.78" fill-opacity="0.218"/><polygon points="554.93,383.94 581.77,377.65 584.73,378.89 557.84,385.23" fill-opacity="0.214"/><polygon points="581.75,377.64 607.68,371.56 610.73,372.78 584.76,378.90" fill-opacity="0.211"/><polygon points="607.66,371.55 632.72,365.67 635.86,366.87 610.76,372.79" fill-opacity="0.207"/><polygon points="632.70,365.66 656.94,359.98 660.16,361.16 635.88,366.88" fill-opacity="0.204"/><polygon points="656.91,359.97 680.37,354.47 683.67,355.63 660.18,361.17" fill-opacity="0.200"/><polygon points="680.32,354.46 703.03,349.14 706.45,350.29 683.71,355.65" fill-opacity="0.195"/><polygon points="702.97,349.12 724.97,343.96 728.52,345.12 706.50,350.31" fill-opacity="0.189"/><polygon points="724.91,343.94 746.23,338.95 749.92,340.11 728.58,345.14" fill-opacity="0.183"/><polygon points="746.17,338.93 766.84,334.09 770.67,335.25 749.98,340.13" fill-opacity="0.177"/><polygon points="766.77,334.07 786.82,329.37 790.80,330.53 770.73,335.27" fill-opacity="0.171"/><polygon points="786.76,329.35 806.22,324.79 810.33,325.96 790.86,330.55" fill-opacity="0.166"/><polygon points="469.47,483.44 490.87,496.80 494.18,495.82 472.73,482.52" fill-opacity="0.384"/><polygon points="490.97,496.77 513.64,510.92 516.80,509.95 494.08,495.85" fill-opacity="0.408"/><polygon points="513.73,510.89 537.79,525.90 540.81,524.93 516.71,509.97" fill-opacity="0.434"/><polygon points="537.88,525.87 563.45,541.83 566.32,540.86 540.71,524.96" fill-opacity="0.463"/><polygon points="563.54,541.80 590.77,558.79 593.50,557.82 566.23,540.89" fill-opacity="0.494"/><polygon points="590.86,558.75 619.93,576.88 622.52,575.91 593.42,557.85" fill-opacity="0.528"/><polygon points="620.01,576.85 651.09,596.24 653.55,595.27 622.43,575.94" fill-opacity="0.565"/><polygon points="651.18,596.20 684.50,616.98 686.81,616.01 653.46,595.30" fill-opacity="0.606"/><polygon points="684.58,616.95 720.39,639.28 722.57,638.30 686.73,616.04" fill-opacity="0.650"/><polygon points="720.45,639.25 759.04,663.30 761.12,662.31 722.51,638.33" fill-opacity="0.689"/><polygon points="759.08,663.28 800.78,689.28 802.80,688.25 761.08,662.33" fill-opacity="0.717"/><polygon points="800.82,689.26 846.03,717.44 847.98,716.36 802.76,688.27" fill-opacity="0.746"/><polygon points="846.07,717.42 895.25,748.07 897.12,746.94 847.94,716.39" fill-opacity="0.778"/><polygon points="107.64,508.99 153.83,497.69 155.25,499.27 108.93,510.65" fill-opacity="0.299"/><polygon points="153.82,497.67 197.93,486.88 199.49,488.43 155.27,499.29" fill-opacity="0.292"/><polygon points="197.91,486.87 240.07,476.56 241.78,478.07 199.51,488.45" fill-opacity="0.285"/><polygon points="240.05,476.54 280.39,466.68 282.23,468.16 241.79,478.09" fill-opacity="0.279"/><polygon points="280.37,466.66 319.00,457.22 320.96,458.67 282.25,468.18" fill-opacity="0.273"/><polygon points="318.98,457.20 356.00,448.15 358.09,449.58 320.99,458.69" fill-opacity="0.267"/><polygon points="355.98,448.14 391.51,439.45 393.71,440.85 358.12,449.59" fill-opacity="0.262"/><polygon points="391.48,439.44 425.59,431.10 427.92,432.47 393.74,440.86" fill-opacity="0.257"/><polygon points="425.57,431.09 458.35,423.08 460.78,424.42 427.94,432.48" fill-opacity="0.252"/><polygon points="458.33,423.06 489.85,415.36 492.39,416.67 460.80,424.43" fill-opacity="0.247"/><polygon points="489.83,415.34 520.17,407.93 522.80,409.22 492.41,416.68" fill-opacity="0.242"/><polygon points="520.14,407.92 549.36,400.77 552.10,402.04 522.83,409.23" fill-opacity="0.238"/><polygon points="549.34,400.76 577.50,393.88 580.33,395.12 552.12,402.05" fill-opacity="0.233"/><polygon points="577.48,393.87 604.64,387.23 607.56,388.45 580.36,395.14" fill-opacity="0.229"/><polygon points="604.61,387.22 630.83,380.81 633.84,382.01 607.59,388.46" fill-opacity="0.225"/><polygon points="630.80,380.80 656.12,374.62 659.21,375.80 633.86,382.03" fill-opacity="0.221"/><polygon points="656.09,374.61 680.55,368.63 683.73,369.79 659.24,375.81" fill-opacity="0.217"/><polygon points="680.51,368.61 704.16,362.84 707.44,363.99 683.77,369.81" fill-opacity="0.212"/><polygon points="704.10,362.82 726.98,357.23 730.40,358.38 707.50,364.01" fill-opacity="0.205"/><polygon points="726.92,357.21 749.06,351.80 752.62,352.96 730.46,358.40" fill-opacity="0.198"/><polygon points="749.00,351.78 770.45,346.54 774.14,347.70 752.68,352.98" fill-opacity="0.191"/><polygon points="770.38,346.52 791.16,341.45 795.00,342.61 774.21,347.72" fill-opacity="0.185"/><polygon points="791.09,341.43 811.23,336.51 815.21,337.68 795.06,342.63" fill-opacity="0.179"/><polygon points="811.17,336.49 830.70,331.72 834.82,332.89 815.28,337.69" fill-opacity="0.173"/><polygon points="471.45,448.01 491.23,459.39 494.81,458.41 474.98,447.09" fill-opacity="0.327"/><polygon points="491.32,459.36 512.18,471.35 515.61,470.38 494.71,458.44" fill-opacity="0.346"/><polygon points="512.27,471.33 534.30,483.99 537.59,483.02 515.52,470.41" fill-opacity="0.366"/><polygon points="534.39,483.96 557.68,497.35 560.83,496.38 537.49,483.05" fill-opacity="0.388"/><polygon points="557.77,497.32 582.45,511.51 585.45,510.54 560.74,496.41" fill-opacity="0.412"/><polygon points="582.54,511.48 608.72,526.52 611.58,525.56 585.36,510.57" fill-opacity="0.438"/><polygon points="608.81,526.49 636.64,542.49 639.37,541.52 611.50,525.59" fill-opacity="0.466"/><polygon points="636.73,542.46 666.37,559.49 668.96,558.52 639.28,541.55" fill-opacity="0.496"/><polygon points="666.46,559.46 698.10,577.63 700.54,576.66 668.88,558.55" fill-opacity="0.529"/><polygon points="698.17,577.60 732.02,597.04 734.33,596.07 700.47,576.69" fill-opacity="0.565"/><polygon points="732.09,597.01 768.38,617.84 770.56,616.87 734.26,596.10" fill-opacity="0.604"/><polygon points="768.41,617.83 807.41,640.22 809.53,639.20 770.52,616.88" fill-opacity="0.626"/><polygon points="807.45,640.20 849.48,664.33 851.53,663.28 809.50,639.22" fill-opacity="0.650"/><polygon points="849.51,664.31 894.94,690.39 896.92,689.29 851.49,663.30" fill-opacity="0.675"/><polygon points="894.98,690.37 944.22,718.64 946.13,717.49 896.88,689.31" fill-opacity="0.703"/><polygon points="121.72,527.04 169.24,514.91 170.66,516.48 123.01,528.70" fill-opacity="0.322"/><polygon points="169.23,514.89 214.53,503.32 216.08,504.86 170.67,516.50" fill-opacity="0.315"/><polygon points="214.51,503.30 257.74,492.26 259.43,493.77 216.10,504.88" fill-opacity="0.307"/><polygon points="257.72,492.25 299.01,481.70 300.84,483.18 259.45,493.79" fill-opacity="0.301"/><polygon points="298.99,481.69 338.48,471.60 340.43,473.05 300.86,483.19" fill-opacity="0.294"/><polygon points="338.46,471.59 376.26,461.94 378.33,463.35 340.45,473.06" fill-opacity="0.288"/><polygon points="376.24,461.92 412.45,452.68 414.64,454.06 378.35,463.36" fill-opacity="0.281"/><polygon points="412.43,452.66 447.16,443.80 449.46,445.15 414.66,454.07" fill-opacity="0.276"/><polygon points="447.14,443.78 480.47,435.27 482.88,436.60 449.48,445.16" fill-opacity="0.270"/><polygon points="480.45,435.26 512.47,427.09 514.98,428.39 482.90,436.61" fill-opacity="0.265"/><polygon points="512.44,427.07 543.23,419.22 545.83,420.49 515.00,428.40" fill-opacity="0.259"/><polygon points="543.20,419.20 572.82,411.65 575.52,412.90 545.86,420.50" fill-opacity="0.254"/><polygon points="572.80,411.63 601.31,404.36 604.10,405.58 575.55,412.91" fill-opacity="0.250"/><polygon points="601.28,404.34 628.76,397.33 631.64,398.54 604.13,405.60" fill-opacity="0.245"/><polygon points="628.73,397.32 655.22,390.56 658.18,391.75 631.66,398.55" fill-opacity="0.241"/><polygon points="655.19,390.55 680.75,384.03 683.80,385.20 658.21,391.76" fill-opacity="0.236"/><polygon points="680.71,384.02 705.38,377.72 708.53,378.87 683.83,385.21" fill-opacity="0.231"/><polygon points="705.33,377.70 729.16,371.62 732.44,372.77 708.59,378.89" fill-opacity="0.222"/><polygon points="729.10,371.60 752.13,365.72 755.55,366.88 732.50,372.80" fill-opacity="0.215"/><polygon points="752.07,365.70 774.35,360.02 777.91,361.18 755.61,366.90" fill-opacity="0.207"/><polygon points="774.28,360.00 795.84,354.50 799.54,355.66 777.97,361.20" fill-opacity="0.200"/><polygon points="795.77,354.48 816.64,349.16 820.49,350.32 799.61,355.68" fill-opacity="0.193"/><polygon points="816.57,349.14 836.79,343.99 840.78,345.15 820.55,350.35" fill-opacity="0.187"/><polygon points="836.72,343.97 856.31,338.97 860.45,340.14 840.85,345.17" fill-opacity="0.180"/><polygon points="491.61,427.39 510.91,437.69 514.62,436.72 495.26,426.47" fill-opacity="0.297"/><polygon points="511.01,437.66 531.32,448.49 534.88,447.52 514.53,436.74" fill-opacity="0.313"/><polygon points="531.41,448.46 552.80,459.86 556.22,458.89 534.79,447.54" fill-opacity="0.330"/><polygon points="552.89,459.83 575.45,471.85 578.72,470.88 556.12,458.92" fill-opacity="0.349"/><polygon points="575.53,471.82 599.35,484.51 602.49,483.55 578.63,470.91" fill-opacity="0.369"/><polygon points="599.44,484.49 624.63,497.91 627.63,496.94 602.40,483.58" fill-opacity="0.391"/><polygon points="624.72,497.88 651.41,512.09 654.26,511.13 627.54,496.97" fill-opacity="0.414"/><polygon points="651.49,512.07 679.81,527.15 682.53,526.18 654.18,511.16" fill-opacity="0.439"/><polygon points="679.89,527.12 710.00,543.15 712.59,542.18 682.45,526.21" fill-opacity="0.467"/><polygon points="710.08,543.12 742.15,560.20 744.60,559.23 712.51,542.21" fill-opacity="0.496"/><polygon points="742.23,560.17 776.46,578.39 778.78,577.41 744.53,559.26" fill-opacity="0.528"/><polygon points="776.51,578.37 813.12,597.86 815.36,596.86 778.73,577.43" fill-opacity="0.551"/><polygon points="813.16,597.84 852.42,618.74 854.59,617.70 815.32,596.87" fill-opacity="0.570"/><polygon points="852.46,618.72 894.66,641.18 896.76,640.10 854.56,617.72" fill-opacity="0.591"/><polygon points="894.70,641.16 940.18,665.36 942.21,664.24 896.72,640.12" fill-opacity="0.614"/><polygon points="940.22,665.34 989.38,691.50 991.32,690.33 942.17,664.26" fill-opacity="0.638"/><polygon points="136.88,546.48 185.80,533.41 187.20,534.97 138.17,548.12" fill-opacity="0.349"/><polygon points="185.78,533.39 232.33,520.95 233.87,522.48 187.22,534.99" fill-opacity="0.340"/><polygon points="232.31,520.93 276.65,509.08 278.33,510.58 233.89,522.50" fill-opacity="0.332"/><polygon points="276.63,509.07 318.92,497.77 320.73,499.23 278.35,510.60" fill-opacity="0.324"/><polygon points="318.90,497.75 359.28,486.96 361.21,488.39 320.75,499.24" fill-opacity="0.317"/><polygon points="359.26,486.95 397.86,476.64 399.91,478.03 361.24,488.41" fill-opacity="0.310"/><polygon points="397.83,476.62 434.76,466.76 436.92,468.13 399.93,478.05" fill-opacity="0.303"/><polygon points="434.73,466.74 470.10,457.30 472.37,458.64 436.95,468.14" fill-opacity="0.297"/><polygon points="470.07,457.28 503.97,448.23 506.35,449.54 472.39,458.65" fill-opacity="0.290"/><polygon points="503.95,448.22 536.47,439.53 538.94,440.82 506.37,449.55" fill-opacity="0.285"/><polygon points="536.44,439.52 567.67,431.18 570.24,432.44 538.97,440.83" fill-opacity="0.279"/><polygon points="567.64,431.17 597.65,423.15 600.31,424.39 570.26,432.45" fill-opacity="0.273"/><polygon points="597.62,423.14 626.48,415.43 629.24,416.64 600.34,424.40" fill-opacity="0.268"/><polygon points="626.46,415.42 654.23,408.01 657.07,409.19 629.26,416.66" fill-opacity="0.263"/><polygon points="654.21,407.99 680.96,400.85 683.88,402.02 657.10,409.21" fill-opacity="0.258"/><polygon points="680.92,400.84 706.71,393.95 709.72,395.10 683.91,402.03" fill-opacity="0.252"/><polygon points="706.65,393.93 731.52,387.29 734.67,388.45 709.78,395.13" fill-opacity="0.243"/><polygon points="731.46,387.27 755.46,380.86 758.75,382.02 734.73,388.47" fill-opacity="0.234"/><polygon points="755.40,380.84 778.57,374.66 782.00,375.81 758.81,382.04" fill-opacity="0.226"/><polygon points="778.51,374.63 800.90,368.66 804.47,369.82 782.07,375.84" fill-opacity="0.217"/><polygon points="800.84,368.64 822.49,362.86 826.20,364.02 804.54,369.84" fill-opacity="0.210"/><polygon points="822.42,362.84 843.37,357.25 847.22,358.42 826.27,364.04" fill-opacity="0.202"/><polygon points="843.30,357.23 863.57,351.82 867.57,352.99 847.30,358.44" fill-opacity="0.195"/><polygon points="863.50,351.80 883.13,346.56 887.28,347.74 867.65,353.01" fill-opacity="0.188"/><polygon points="509.90,408.67 528.74,418.03 532.58,417.06 513.69,407.75" fill-opacity="0.271"/><polygon points="528.84,418.00 548.61,427.82 552.29,426.86 532.48,417.09" fill-opacity="0.284"/><polygon points="548.70,427.80 569.47,438.11 573.01,437.15 552.20,426.88" fill-opacity="0.299"/><polygon points="569.56,438.09 591.40,448.94 594.80,447.97 572.92,437.17" fill-opacity="0.315"/><polygon points="591.49,448.91 614.49,460.33 617.75,459.37 594.71,448.00" fill-opacity="0.332"/><polygon points="614.58,460.31 638.84,472.35 641.96,471.39 617.67,459.40" fill-opacity="0.351"/><polygon points="638.92,472.32 664.54,485.04 667.53,484.08 641.88,471.41" fill-opacity="0.370"/><polygon points="664.62,485.02 691.72,498.46 694.58,497.50 667.45,484.10" fill-opacity="0.392"/><polygon points="691.80,498.44 720.52,512.69 723.23,511.72 694.50,497.53" fill-opacity="0.415"/><polygon points="720.59,512.66 751.06,527.78 753.65,526.81 723.16,511.75" fill-opacity="0.439"/><polygon points="751.14,527.75 783.53,543.82 785.99,542.85 753.58,526.83" fill-opacity="0.466"/><polygon points="783.59,543.80 818.10,560.91 820.45,559.92 785.93,542.87" fill-opacity="0.488"/><polygon points="818.14,560.90 854.97,579.17 857.26,578.14 820.42,559.94" fill-opacity="0.504"/><polygon points="855.01,579.15 894.41,598.69 896.63,597.63 857.22,578.16" fill-opacity="0.521"/><polygon points="894.45,598.68 936.71,619.63 938.85,618.53 896.60,597.65" fill-opacity="0.540"/><polygon points="936.74,619.61 982.17,642.14 984.23,641.00 938.81,618.55" fill-opacity="0.560"/><polygon points="982.20,642.11 1031.16,666.39 1033.14,665.21 984.19,641.02" fill-opacity="0.581"/><polygon points="153.25,567.45 203.64,553.34 205.03,554.89 154.53,569.09" fill-opacity="0.379"/><polygon points="203.62,553.31 251.48,539.91 253.01,541.43 205.05,554.91" fill-opacity="0.369"/><polygon points="251.46,539.89 296.96,527.14 298.63,528.62 253.03,541.45" fill-opacity="0.360"/><polygon points="296.94,527.12 340.27,514.99 342.06,516.43 298.65,528.64" fill-opacity="0.351"/><polygon points="340.24,514.97 381.54,503.40 383.46,504.81 342.08,516.45" fill-opacity="0.343"/><polygon points="381.52,503.38 420.93,492.34 422.96,493.72 383.48,504.83" fill-opacity="0.335"/><polygon points="420.91,492.33 458.56,481.78 460.69,483.13 422.98,493.74" fill-opacity="0.328"/><polygon points="458.53,481.77 494.53,471.68 496.78,473.01 460.72,483.15" fill-opacity="0.320"/><polygon points="494.51,471.67 528.97,462.02 531.32,463.31 496.80,473.02" fill-opacity="0.313"/><polygon points="528.95,462.00 561.97,452.76 564.41,454.02 531.34,463.33" fill-opacity="0.307"/><polygon points="561.94,452.74 593.61,443.88 596.14,445.12 564.44,454.04" fill-opacity="0.300"/><polygon points="593.58,443.86 623.97,435.35 626.60,436.57 596.17,445.13" fill-opacity="0.294"/><polygon points="623.95,435.34 653.14,427.17 655.85,428.36 626.62,436.58" fill-opacity="0.288"/><polygon points="653.12,427.15 681.18,419.29 683.98,420.46 655.88,428.37" fill-opacity="0.283"/><polygon points="681.15,419.28 708.16,411.72 711.03,412.87 684.01,420.48" fill-opacity="0.277"/><polygon points="708.10,411.70 734.10,404.42 737.11,405.57 711.09,412.90" fill-opacity="0.266"/><polygon points="734.04,404.40 759.09,397.39 762.24,398.54 737.17,405.60" fill-opacity="0.256"/><polygon points="759.02,397.36 783.18,390.60 786.47,391.76 762.30,398.56" fill-opacity="0.246"/><polygon points="783.11,390.58 806.41,384.06 809.85,385.22 786.53,391.78" fill-opacity="0.237"/><polygon points="806.35,384.04 828.84,377.74 832.42,378.91 809.92,385.24" fill-opacity="0.228"/><polygon points="828.77,377.72 850.50,371.64 854.23,372.81 832.49,378.93" fill-opacity="0.220"/><polygon points="850.43,371.62 871.43,365.74 875.30,366.92 854.30,372.83" fill-opacity="0.212"/><polygon points="871.36,365.72 891.67,360.04 895.69,361.22 875.38,366.94" fill-opacity="0.204"/><polygon points="891.59,360.02 911.25,354.52 915.42,355.70 895.77,361.24" fill-opacity="0.197"/><polygon points="508.92,383.44 526.49,391.61 530.60,390.65 512.98,382.51" fill-opacity="0.236"/><polygon points="526.59,391.59 544.96,400.14 548.92,399.17 530.50,390.67" fill-opacity="0.247"/><polygon points="545.06,400.11 564.30,409.06 568.11,408.10 548.83,399.20" fill-opacity="0.259"/><polygon points="564.39,409.04 584.56,418.42 588.23,417.46 568.02,408.12" fill-opacity="0.272"/><polygon points="584.64,418.40 605.81,428.23 609.34,427.27 588.14,417.48" fill-opacity="0.286"/><polygon points="605.89,428.21 628.12,438.54 631.52,437.58 609.25,427.30" fill-opacity="0.301"/><polygon points="628.21,438.52 651.59,449.39 654.85,448.43 631.43,437.61" fill-opacity="0.316"/><polygon points="651.67,449.36 676.30,460.81 679.42,459.85 654.77,448.45" fill-opacity="0.333"/><polygon points="676.38,460.78 702.35,472.85 705.34,471.89 679.34,459.87" fill-opacity="0.351"/><polygon points="702.43,472.83 729.86,485.57 732.72,484.61 705.26,471.91" fill-opacity="0.371"/><polygon points="729.94,485.55 758.96,499.03 761.68,498.06 732.64,484.63" fill-opacity="0.391"/><polygon points="759.03,499.00 789.77,513.28 792.37,512.31 761.61,498.08" fill-opacity="0.413"/><polygon points="789.84,513.26 822.47,528.41 824.94,527.43 792.30,512.33" fill-opacity="0.435"/><polygon points="822.50,528.39 857.20,544.51 859.60,543.49 824.90,527.44" fill-opacity="0.449"/><polygon points="857.23,544.49 894.19,561.65 896.53,560.61 859.57,543.51" fill-opacity="0.463"/><polygon points="894.23,561.63 933.68,579.95 935.94,578.87 896.49,560.62" fill-opacity="0.478"/><polygon points="933.72,579.94 975.93,599.53 978.11,598.41 935.91,578.89" fill-opacity="0.495"/><polygon points="975.96,599.51 1021.23,620.53 1023.32,619.37 978.07,598.43" fill-opacity="0.512"/><polygon points="1021.26,620.51 1069.93,643.10 1071.93,641.89 1023.29,619.39" fill-opacity="0.531"/><polygon points="170.97,590.16 222.91,574.87 224.29,576.41 172.24,591.80" fill-opacity="0.413"/><polygon points="222.89,574.85 272.12,560.35 273.64,561.86 224.31,576.43" fill-opacity="0.402"/><polygon points="272.10,560.33 318.82,546.58 320.47,548.04 273.66,561.88" fill-opacity="0.392"/><polygon points="318.80,546.56 363.20,533.48 364.97,534.92 320.49,548.06" fill-opacity="0.382"/><polygon points="363.17,533.47 405.42,521.03 407.31,522.43 364.99,534.93" fill-opacity="0.372"/><polygon points="405.40,521.01 445.64,509.16 447.65,510.53 407.34,522.44" fill-opacity="0.363"/><polygon points="445.62,509.15 484.00,497.85 486.11,499.18 447.67,510.55" fill-opacity="0.355"/><polygon points="483.98,497.83 520.63,487.04 522.84,488.35 486.14,499.20" fill-opacity="0.347"/><polygon points="520.60,487.03 555.63,476.72 557.94,477.99 522.87,488.36" fill-opacity="0.339"/><polygon points="555.61,476.70 589.12,466.84 591.53,468.09 557.97,478.01" fill-opacity="0.332"/><polygon points="589.09,466.82 621.19,457.38 623.69,458.60 591.55,468.10" fill-opacity="0.325"/><polygon points="621.16,457.36 651.93,448.31 654.51,449.51 623.72,458.61" fill-opacity="0.318"/><polygon points="651.90,448.30 681.42,439.61 684.09,440.78 654.54,449.52" fill-opacity="0.311"/><polygon points="681.39,439.60 709.74,431.26 712.48,432.41 684.12,440.80" fill-opacity="0.305"/><polygon points="709.68,431.23 736.92,423.22 739.80,424.37 712.54,432.43" fill-opacity="0.293"/><polygon points="736.86,423.19 763.05,415.49 766.07,416.64 739.86,424.39" fill-opacity="0.281"/><polygon points="762.99,415.46 788.20,408.05 791.36,409.20 766.14,416.67" fill-opacity="0.270"/><polygon points="788.14,408.02 812.42,400.88 815.72,402.04 791.43,409.23" fill-opacity="0.259"/><polygon points="812.35,400.86 835.76,393.97 839.21,395.14 815.79,402.06" fill-opacity="0.249"/><polygon points="835.69,393.95 858.26,387.31 861.85,388.48 839.27,395.16" fill-opacity="0.240"/><polygon points="858.19,387.29 879.97,380.88 883.72,382.06 861.93,388.50" fill-opacity="0.230"/><polygon points="879.90,380.86 900.94,374.67 904.83,375.85 883.79,382.08" fill-opacity="0.222"/><polygon points="900.86,374.65 921.19,368.67 925.23,369.86 904.91,375.87" fill-opacity="0.213"/><polygon points="921.11,368.65 940.76,362.88 944.96,364.06 925.31,369.88" fill-opacity="0.205"/><polygon points="524.60,368.46 541.77,375.97 546.00,375.01 528.79,367.54" fill-opacity="0.217"/><polygon points="541.86,375.95 559.78,383.78 563.87,382.82 545.91,375.03" fill-opacity="0.227"/><polygon points="559.87,383.76 578.60,391.95 582.55,390.99 563.78,382.85" fill-opacity="0.238"/><polygon points="578.69,391.93 598.28,400.49 602.09,399.54 582.46,391.01" fill-opacity="0.249"/><polygon points="598.37,400.47 618.88,409.44 622.55,408.48 602.00,399.56" fill-opacity="0.261"/><polygon points="618.96,409.42 640.46,418.81 643.99,417.85 622.46,408.50" fill-opacity="0.273"/><polygon points="640.55,418.79 663.11,428.65 666.50,427.69 643.91,417.87" fill-opacity="0.287"/><polygon points="663.19,428.62 686.89,438.98 690.14,438.02 666.42,427.71" fill-opacity="0.301"/><polygon points="686.97,438.95 711.89,449.84 715.02,448.88 690.06,438.04" fill-opacity="0.317"/><polygon points="711.97,449.82 738.23,461.29 741.22,460.32 714.94,448.91" fill-opacity="0.333"/><polygon points="738.30,461.26 766.00,473.36 768.85,472.39 741.14,460.35" fill-opacity="0.351"/><polygon points="766.07,473.33 795.32,486.11 798.05,485.14 768.78,472.42" fill-opacity="0.369"/><polygon points="795.39,486.08 826.33,499.59 828.93,498.62 797.98,485.16" fill-opacity="0.389"/><polygon points="826.37,499.58 859.15,513.89 861.68,512.89 828.89,498.63" fill-opacity="0.402"/><polygon points="859.19,513.87 893.99,529.07 896.45,528.03 861.65,512.90" fill-opacity="0.414"/><polygon points="894.02,529.05 931.02,545.20 933.41,544.14 896.41,528.05" fill-opacity="0.427"/><polygon points="931.06,545.18 970.48,562.39 972.79,561.29 933.37,544.15" fill-opacity="0.440"/><polygon points="970.52,562.37 1012.60,580.74 1014.82,579.60 972.75,561.31" fill-opacity="0.455"/><polygon points="1012.63,580.72 1057.66,600.37 1059.79,599.19 1014.78,579.62" fill-opacity="0.471"/><polygon points="1057.70,600.35 1105.99,621.43 1108.02,620.21 1059.76,599.21" fill-opacity="0.487"/><polygon points="190.21,614.83 243.80,598.20 245.17,599.74 191.48,616.46" fill-opacity="0.452"/><polygon points="243.78,598.18 294.45,582.46 295.96,583.95 245.19,599.76" fill-opacity="0.439"/><polygon points="294.43,582.44 342.41,567.55 344.05,569.01 295.98,583.97" fill-opacity="0.427"/><polygon points="342.39,567.53 387.90,553.41 389.66,554.83 344.07,569.03" fill-opacity="0.416"/><polygon points="387.88,553.39 431.10,539.99 432.97,541.37 389.68,554.85" fill-opacity="0.405"/><polygon points="431.07,539.97 472.17,527.22 474.15,528.57 432.99,541.39" fill-opacity="0.395"/><polygon points="472.14,527.20 511.27,515.06 513.36,516.38 474.17,528.58" fill-opacity="0.386"/><polygon points="511.25,515.05 548.55,503.48 550.73,504.77 513.38,516.40" fill-opacity="0.377"/><polygon points="548.52,503.46 584.11,492.42 586.39,493.68 550.76,504.78" fill-opacity="0.368"/><polygon points="584.09,492.41 618.09,481.86 620.46,483.09 586.42,493.70" fill-opacity="0.360"/><polygon points="618.06,481.85 650.58,471.76 653.04,472.97 620.49,483.11" fill-opacity="0.352"/><polygon points="650.55,471.75 681.68,462.10 684.22,463.27 653.07,472.98" fill-opacity="0.344"/><polygon points="681.65,462.08 711.48,452.84 714.10,453.99 684.25,463.29" fill-opacity="0.337"/><polygon points="711.42,452.81 740.02,443.94 742.77,445.09 714.15,454.01" fill-opacity="0.324"/><polygon points="739.96,443.92 767.41,435.41 770.30,436.56 742.83,445.12" fill-opacity="0.310"/><polygon points="767.35,435.38 793.72,427.21 796.74,428.36 770.36,436.59" fill-opacity="0.297"/><polygon points="793.65,427.18 819.00,419.32 822.17,420.49 796.81,428.39" fill-opacity="0.285"/><polygon points="818.94,419.30 843.32,411.74 846.64,412.90 822.24,420.51" fill-opacity="0.273"/><polygon points="843.25,411.72 866.74,404.44 870.20,405.61 846.71,412.93" fill-opacity="0.262"/><polygon points="866.66,404.41 889.29,397.40 892.90,398.58 870.27,405.63" fill-opacity="0.252"/><polygon points="889.22,397.38 911.03,390.62 914.79,391.80 892.98,398.60" fill-opacity="0.242"/><polygon points="910.95,390.60 932.00,384.08 935.91,385.26 914.87,391.82" fill-opacity="0.232"/><polygon points="931.92,384.05 952.24,377.76 956.31,378.95 935.99,385.28" fill-opacity="0.223"/><polygon points="952.16,377.73 971.78,371.66 976.01,372.85 956.39,378.97" fill-opacity="0.215"/><polygon points="522.83,348.04 538.94,354.69 543.44,353.73 527.29,347.12" fill-opacity="0.192"/><polygon points="539.03,354.67 555.80,361.59 560.16,360.63 543.35,353.75" fill-opacity="0.201"/><polygon points="555.89,361.57 573.37,368.78 577.59,367.82 560.07,360.65" fill-opacity="0.209"/><polygon points="573.46,368.76 591.70,376.28 595.77,375.33 577.50,367.84" fill-opacity="0.218"/><polygon points="591.78,376.26 610.82,384.11 614.76,383.16 595.69,375.35" fill-opacity="0.228"/><polygon points="610.91,384.09 630.80,392.30 634.59,391.34 614.67,383.18" fill-opacity="0.239"/><polygon points="630.88,392.28 651.69,400.85 655.35,399.90 634.51,391.36" fill-opacity="0.250"/><polygon points="651.77,400.83 673.55,409.81 677.08,408.86 655.26,399.92" fill-opacity="0.261"/><polygon points="673.63,409.79 696.47,419.21 699.86,418.25 677.00,408.88" fill-opacity="0.274"/><polygon points="696.55,419.18 720.51,429.06 723.76,428.10 699.78,418.27" fill-opacity="0.287"/><polygon points="720.58,429.04 745.76,439.41 748.88,438.45 723.69,428.12" fill-opacity="0.301"/><polygon points="745.83,439.39 772.31,450.30 775.31,449.34 748.81,438.47" fill-opacity="0.316"/><polygon points="772.38,450.28 800.28,461.77 803.14,460.80 775.24,449.36" fill-opacity="0.332"/><polygon points="800.35,461.75 829.76,473.87 832.50,472.89 803.07,460.82" fill-opacity="0.349"/><polygon points="829.81,473.85 860.89,486.65 863.54,485.66 832.46,472.91" fill-opacity="0.362"/><polygon points="860.92,486.64 893.80,500.18 896.38,499.15 863.50,485.67" fill-opacity="0.372"/><polygon points="893.83,500.16 928.67,514.51 931.18,513.46 896.34,499.17" fill-opacity="0.383"/><polygon points="928.70,514.49 965.68,529.72 968.11,528.64 931.14,513.47" fill-opacity="0.394"/><polygon points="965.72,529.71 1005.03,545.90 1007.38,544.78 968.07,528.65" fill-opacity="0.407"/><polygon points="1005.07,545.88 1046.96,563.13 1049.22,561.97 1007.35,544.79" fill-opacity="0.420"/><polygon points="1047.00,563.11 1091.72,581.53 1093.89,580.33 1049.19,561.99" fill-opacity="0.434"/><polygon points="1091.76,581.51 1139.62,601.22 1141.69,599.98 1093.86,580.35" fill-opacity="0.448"/><polygon points="211.19,641.72 266.51,623.58 267.87,625.11 212.45,643.34" fill-opacity="0.496"/><polygon points="266.49,623.56 318.67,606.45 320.17,607.93 267.89,625.13" fill-opacity="0.482"/><polygon points="318.65,606.43 367.96,590.26 369.57,591.70 320.19,607.95" fill-opacity="0.468"/><polygon points="367.93,590.24 414.59,574.94 416.33,576.35 369.60,591.72" fill-opacity="0.455"/><polygon points="414.57,574.93 458.78,560.43 460.63,561.79 416.35,576.37" fill-opacity="0.443"/><polygon points="458.76,560.41 500.72,546.65 502.68,547.98 460.66,561.81" fill-opacity="0.432"/><polygon points="500.70,546.64 540.57,533.56 542.63,534.86 502.70,548.00" fill-opacity="0.421"/><polygon points="540.55,533.55 578.49,521.11 580.65,522.38 542.66,534.88" fill-opacity="0.411"/><polygon points="578.47,521.09 614.62,509.24 616.86,510.48 580.67,522.39" fill-opacity="0.401"/><polygon points="614.59,509.23 649.07,497.93 651.40,499.14 616.89,510.50" fill-opacity="0.391"/><polygon points="649.04,497.91 681.96,487.12 684.38,488.31 651.43,499.15" fill-opacity="0.382"/><polygon points="681.93,487.11 713.40,476.80 715.89,477.95 684.40,488.32" fill-opacity="0.374"/><polygon points="713.35,476.77 743.46,466.91 746.07,468.06 715.94,477.98" fill-opacity="0.360"/><polygon points="743.39,466.88 772.23,457.43 774.98,458.59 746.13,468.08" fill-opacity="0.344"/><polygon points="772.16,457.41 799.80,448.35 802.69,449.51 775.04,458.61" fill-opacity="0.329"/><polygon points="799.73,448.33 826.25,439.64 829.28,440.80 802.76,449.54" fill-opacity="0.315"/><polygon points="826.18,439.61 851.64,431.27 854.82,432.44 829.35,440.83" fill-opacity="0.301"/><polygon points="851.57,431.25 876.03,423.23 879.36,424.40 854.89,432.47" fill-opacity="0.288"/><polygon points="875.96,423.21 899.49,415.50 902.97,416.68 879.44,424.43" fill-opacity="0.276"/><polygon points="899.42,415.48 922.06,408.06 925.70,409.24 903.05,416.70" fill-opacity="0.264"/><polygon points="921.99,408.04 943.80,400.89 947.58,402.08 925.77,409.27" fill-opacity="0.254"/><polygon points="943.72,400.87 964.74,393.99 968.68,395.18 947.66,402.11" fill-opacity="0.243"/><polygon points="964.66,393.96 984.94,387.32 989.04,388.52 968.77,395.20" fill-opacity="0.234"/><polygon points="984.85,387.30 1004.43,380.89 1008.68,382.10 989.12,388.55" fill-opacity="0.224"/><polygon points="521.24,329.88 536.41,335.81 541.18,334.85 525.97,328.95" fill-opacity="0.171"/><polygon points="536.50,335.79 552.26,341.94 556.90,340.99 541.09,334.86" fill-opacity="0.178"/><polygon points="552.36,341.93 568.74,348.33 573.23,347.37 556.80,341.01" fill-opacity="0.186"/><polygon points="568.83,348.31 585.88,354.97 590.23,354.01 573.14,347.39" fill-opacity="0.193"/><polygon points="585.97,354.95 603.73,361.88 607.93,360.92 590.14,354.03" fill-opacity="0.201"/><polygon points="603.81,361.86 622.32,369.09 626.39,368.13 607.85,360.94" fill-opacity="0.210"/><polygon points="622.40,369.07 641.70,376.60 645.63,375.64 626.30,368.15" fill-opacity="0.219"/><polygon points="641.79,376.58 661.94,384.44 665.73,383.49 645.55,375.66" fill-opacity="0.229"/><polygon points="662.02,384.42 683.07,392.64 686.73,391.68 665.65,383.51" fill-opacity="0.239"/><polygon points="683.15,392.62 705.18,401.22 708.70,400.26 686.65,391.71" fill-opacity="0.250"/><polygon points="705.26,401.19 728.32,410.19 731.71,409.23 708.63,400.28" fill-opacity="0.262"/><polygon points="728.39,410.17 752.57,419.60 755.83,418.64 731.64,409.25" fill-opacity="0.274"/><polygon points="752.64,419.58 778.01,429.48 781.14,428.51 755.76,418.66" fill-opacity="0.287"/><polygon points="778.08,429.45 804.74,439.85 807.74,438.88 781.07,428.53" fill-opacity="0.300"/><polygon points="804.81,439.83 832.84,450.76 835.72,449.79 807.67,438.90" fill-opacity="0.315"/><polygon points="832.90,450.74 862.43,462.26 865.21,461.27 835.67,449.81" fill-opacity="0.327"/><polygon points="862.47,462.25 893.62,474.39 896.33,473.38 865.17,461.28" fill-opacity="0.336"/><polygon points="893.66,474.38 926.56,487.21 929.20,486.17 896.29,473.39" fill-opacity="0.345"/><polygon points="926.60,487.19 961.42,500.77 963.97,499.69 929.16,486.18" fill-opacity="0.355"/><polygon points="961.45,500.75 998.35,515.13 1000.82,514.03 963.94,499.71" fill-opacity="0.365"/><polygon points="998.38,515.12 1037.54,530.38 1039.93,529.24 1000.79,514.04" fill-opacity="0.376"/><polygon points="1037.58,530.37 1079.23,546.60 1081.53,545.42 1039.90,529.26" fill-opacity="0.388"/><polygon points="1079.26,546.58 1123.64,563.88 1125.84,562.66 1081.49,545.44" fill-opacity="0.401"/><polygon points="1123.68,563.86 1171.06,582.32 1173.16,581.07 1125.81,562.68" fill-opacity="0.414"/><polygon points="234.15,671.15 291.30,651.28 292.65,652.79 235.40,672.76" fill-opacity="0.547"/><polygon points="291.28,651.26 345.05,632.57 346.53,634.03 292.67,652.82" fill-opacity="0.530"/><polygon points="345.03,632.54 395.70,614.93 397.30,616.35 346.55,634.05" fill-opacity="0.515"/><polygon points="395.68,614.91 443.51,598.28 445.23,599.66 397.33,616.37" fill-opacity="0.500"/><polygon points="443.49,598.26 488.72,582.54 490.55,583.88 445.26,599.68" fill-opacity="0.486"/><polygon points="488.70,582.52 531.54,567.63 533.47,568.94 490.58,583.90" fill-opacity="0.473"/><polygon points="531.51,567.61 572.14,553.49 574.17,554.77 533.49,568.96" fill-opacity="0.461"/><polygon points="572.11,553.47 610.70,540.06 612.82,541.31 574.19,554.79" fill-opacity="0.449"/><polygon points="610.67,540.05 647.36,527.30 649.57,528.52 612.84,541.33" fill-opacity="0.438"/><polygon points="647.33,527.28 682.26,515.14 684.56,516.33 649.59,528.53" fill-opacity="0.427"/><polygon points="682.24,515.13 715.54,503.56 717.91,504.72 684.59,516.35" fill-opacity="0.417"/><polygon points="715.49,503.54 747.27,492.50 749.75,493.64 717.95,504.74" fill-opacity="0.403"/><polygon points="747.21,492.47 777.57,481.92 780.18,483.07 749.81,493.67" fill-opacity="0.384"/><polygon points="777.50,481.89 806.53,471.81 809.29,472.96 780.25,483.10" fill-opacity="0.366"/><polygon points="806.47,471.78 834.26,462.13 837.16,463.29 809.36,472.99" fill-opacity="0.349"/><polygon points="834.19,462.10 860.81,452.85 863.86,454.02 837.23,463.31" fill-opacity="0.333"/><polygon points="860.74,452.82 886.28,443.96 889.47,445.13 863.94,454.04" fill-opacity="0.318"/><polygon points="886.20,443.93 910.71,435.42 914.06,436.60 889.55,445.16" fill-opacity="0.304"/><polygon points="910.63,435.39 934.18,427.22 937.68,428.40 914.14,436.62" fill-opacity="0.291"/><polygon points="934.10,427.19 956.73,419.34 960.39,420.52 937.76,428.43" fill-opacity="0.278"/><polygon points="956.65,419.31 978.43,411.75 982.24,412.95 960.47,420.55" fill-opacity="0.266"/><polygon points="978.34,411.72 999.31,404.45 1003.28,405.65 982.32,412.97" fill-opacity="0.255"/><polygon points="999.22,404.42 1019.43,397.41 1023.56,398.62 1003.37,405.68" fill-opacity="0.244"/><polygon points="1019.34,397.39 1038.82,390.63 1043.11,391.84 1023.65,398.65" fill-opacity="0.234"/><polygon points="549.19,324.42 564.61,330.14 569.37,329.18 553.91,323.50" fill-opacity="0.166"/><polygon points="564.70,330.12 580.71,336.06 585.33,335.10 569.28,329.20" fill-opacity="0.172"/><polygon points="580.80,336.04 597.43,342.21 601.91,341.25 585.24,335.12" fill-opacity="0.179"/><polygon points="597.52,342.19 614.82,348.60 619.16,347.64 601.83,341.27" fill-opacity="0.186"/><polygon points="614.90,348.58 632.90,355.25 637.10,354.29 619.07,347.66" fill-opacity="0.194"/><polygon points="632.98,355.23 651.72,362.17 655.79,361.22 637.02,354.31" fill-opacity="0.202"/><polygon points="651.80,362.16 671.33,369.39 675.26,368.44 655.70,361.24" fill-opacity="0.211"/><polygon points="671.41,369.37 691.78,376.92 695.58,375.96 675.18,368.45" fill-opacity="0.220"/><polygon points="691.86,376.90 713.13,384.78 716.79,383.82 695.50,375.98" fill-opacity="0.229"/><polygon points="713.21,384.76 735.43,392.99 738.96,392.03 716.72,383.84" fill-opacity="0.239"/><polygon points="735.51,392.97 758.76,401.58 762.16,400.62 738.89,392.05" fill-opacity="0.250"/><polygon points="758.83,401.56 783.18,410.57 786.44,409.61 762.08,400.64" fill-opacity="0.261"/><polygon points="783.25,410.55 808.77,420.00 811.91,419.03 786.37,409.63" fill-opacity="0.273"/><polygon points="808.84,419.98 835.62,429.89 838.63,428.92 811.84,419.05" fill-opacity="0.285"/><polygon points="835.68,429.87 863.82,440.29 866.72,439.31 838.57,428.94" fill-opacity="0.297"/><polygon points="863.85,440.28 893.46,451.23 896.29,450.23 866.68,439.32" fill-opacity="0.305"/><polygon points="893.49,451.22 924.68,462.76 927.44,461.73 896.25,450.24" fill-opacity="0.313"/><polygon points="924.71,462.75 957.61,474.92 960.29,473.86 927.40,461.74" fill-opacity="0.321"/><polygon points="957.64,474.91 992.39,487.77 994.99,486.67 960.25,473.87" fill-opacity="0.330"/><polygon points="992.43,487.75 1029.19,501.36 1031.71,500.23 994.96,486.69" fill-opacity="0.339"/><polygon points="1029.23,501.34 1068.19,515.76 1070.62,514.60 1031.67,500.25" fill-opacity="0.349"/><polygon points="1068.22,515.74 1109.58,531.04 1111.92,529.85 1070.58,514.61" fill-opacity="0.360"/><polygon points="1109.62,531.03 1153.61,547.30 1155.84,546.07 1111.88,529.87" fill-opacity="0.371"/><polygon points="1153.64,547.28 1200.52,564.62 1202.64,563.35 1155.80,546.09" fill-opacity="0.383"/><polygon points="259.38,703.50 318.47,681.64 319.81,683.13 260.62,705.09" fill-opacity="0.606"/><polygon points="318.45,681.61 373.87,661.11 375.34,662.56 319.83,683.16" fill-opacity="0.587"/><polygon points="373.85,661.09 425.94,641.82 427.53,643.23 375.36,662.58" fill-opacity="0.569"/><polygon points="425.92,641.80 474.97,623.66 476.66,625.02 427.55,643.25" fill-opacity="0.552"/><polygon points="474.94,623.64 521.21,606.52 523.01,607.85 476.69,625.04" fill-opacity="0.536"/><polygon points="521.19,606.50 564.90,590.34 566.80,591.63 523.04,607.87" fill-opacity="0.521"/><polygon points="564.87,590.32 606.24,575.02 608.24,576.28 566.83,591.65" fill-opacity="0.507"/><polygon points="606.21,575.00 645.42,560.51 647.50,561.73 608.26,576.30" fill-opacity="0.493"/><polygon points="645.39,560.49 682.60,546.73 684.77,547.93 647.53,561.75" fill-opacity="0.480"/><polygon points="682.57,546.72 717.93,533.64 720.18,534.81 684.80,547.94" fill-opacity="0.468"/><polygon points="717.90,533.62 751.54,521.18 753.88,522.33 720.22,534.83" fill-opacity="0.454"/><polygon points="751.48,521.15 783.53,509.30 786.02,510.45 753.95,522.36" fill-opacity="0.431"/><polygon points="783.47,509.27 814.04,497.97 816.67,499.13 786.08,510.48" fill-opacity="0.410"/><polygon points="813.97,497.94 843.16,487.15 845.93,488.31 816.73,499.16" fill-opacity="0.390"/><polygon points="843.09,487.12 870.99,476.81 873.91,477.98 846.01,488.34" fill-opacity="0.371"/><polygon points="870.92,476.78 897.62,466.92 900.68,468.09 873.99,478.01" fill-opacity="0.353"/><polygon points="897.54,466.89 923.11,457.44 926.33,458.62 900.76,468.12" fill-opacity="0.336"/><polygon points="923.03,457.41 947.54,448.36 950.91,449.55 926.41,458.65" fill-opacity="0.321"/><polygon points="947.45,448.33 970.97,439.65 974.50,440.84 950.99,449.57" fill-opacity="0.306"/><polygon points="970.88,439.62 993.46,431.28 997.15,432.48 974.58,440.87" fill-opacity="0.292"/><polygon points="993.38,431.25 1015.07,423.24 1018.92,424.45 997.24,432.51" fill-opacity="0.279"/><polygon points="1014.99,423.21 1035.86,415.51 1039.87,416.72 1019.01,424.48" fill-opacity="0.267"/><polygon points="576.17,319.15 591.81,324.67 596.56,323.72 580.88,318.23" fill-opacity="0.160"/><polygon points="591.90,324.65 608.13,330.38 612.74,329.43 596.47,323.73" fill-opacity="0.166"/><polygon points="608.22,330.36 625.07,336.31 629.54,335.35 612.66,329.44" fill-opacity="0.173"/><polygon points="625.16,336.29 642.67,342.47 647.00,341.51 629.46,335.37" fill-opacity="0.180"/><polygon points="642.75,342.45 660.95,348.87 665.15,347.92 646.92,341.53" fill-opacity="0.187"/><polygon points="661.04,348.85 679.98,355.53 684.04,354.58 665.07,347.93" fill-opacity="0.194"/><polygon points="680.06,355.51 699.78,362.47 703.71,361.51 683.96,354.60" fill-opacity="0.202"/><polygon points="699.86,362.45 720.42,369.70 724.22,368.74 703.64,361.53" fill-opacity="0.211"/><polygon points="720.50,369.68 741.94,377.24 745.61,376.28 724.14,368.76" fill-opacity="0.219"/><polygon points="742.02,377.22 764.41,385.11 767.94,384.15 745.53,376.30" fill-opacity="0.229"/><polygon points="764.48,385.09 787.88,393.34 791.29,392.37 767.87,384.17" fill-opacity="0.239"/><polygon points="787.95,393.32 812.43,401.94 815.71,400.98 791.22,392.39" fill-opacity="0.249"/><polygon points="812.50,401.92 838.13,410.95 841.28,409.98 815.64,401.00" fill-opacity="0.260"/><polygon points="838.20,410.93 865.07,420.40 868.09,419.43 841.21,410.00" fill-opacity="0.271"/><polygon points="865.10,420.39 893.30,430.32 896.26,429.32 868.06,419.44" fill-opacity="0.278"/><polygon points="893.34,430.31 922.97,440.75 925.85,439.72 896.22,429.34" fill-opacity="0.285"/><polygon points="923.00,440.74 954.18,451.72 956.99,450.66 925.82,439.74" fill-opacity="0.292"/><polygon points="954.21,451.70 987.05,463.27 989.78,462.19 956.95,450.68" fill-opacity="0.300"/><polygon points="987.09,463.25 1021.73,475.45 1024.38,474.34 989.75,462.20" fill-opacity="0.308"/><polygon points="1021.76,475.44 1058.36,488.33 1060.92,487.19 1024.34,474.36" fill-opacity="0.316"/><polygon points="1058.40,488.31 1097.12,501.95 1099.59,500.77 1060.89,487.20" fill-opacity="0.325"/><polygon points="1097.15,501.93 1138.19,516.38 1140.56,515.17 1099.55,500.79" fill-opacity="0.335"/><polygon points="1138.23,516.37 1181.80,531.71 1184.06,530.46 1140.53,515.19" fill-opacity="0.345"/><polygon points="1181.83,531.69 1228.17,548.00 1230.32,546.71 1184.02,530.47" fill-opacity="0.356"/><polygon points="287.24,739.21 348.37,715.05 349.70,716.53 288.48,740.80" fill-opacity="0.674"/><polygon points="348.35,715.02 405.51,692.43 406.96,693.87 349.72,716.55" fill-opacity="0.652"/><polygon points="405.48,692.41 459.04,671.24 460.60,672.64 406.98,693.89" fill-opacity="0.631"/><polygon points="459.01,671.22 509.30,651.35 510.97,652.70 460.63,672.66" fill-opacity="0.612"/><polygon points="509.27,651.33 556.58,632.64 558.35,633.95 511.00,652.72" fill-opacity="0.593"/><polygon points="556.55,632.62 601.14,615.00 603.01,616.28 558.38,633.97" fill-opacity="0.576"/><polygon points="601.11,614.98 643.20,598.35 645.16,599.59 603.04,616.29" fill-opacity="0.559"/><polygon points="643.17,598.34 682.97,582.61 685.02,583.82 645.19,599.61" fill-opacity="0.544"/><polygon points="682.95,582.60 720.64,567.70 722.77,568.88 685.05,583.83" fill-opacity="0.529"/><polygon points="720.61,567.69 756.36,553.57 758.56,554.71 722.80,568.89" fill-opacity="0.515"/><polygon points="756.29,553.53 790.24,540.12 792.59,541.27 758.63,554.74" fill-opacity="0.487"/><polygon points="790.18,540.09 822.46,527.34 824.95,528.50 792.66,541.31" fill-opacity="0.462"/><polygon points="822.39,527.31 853.13,515.17 855.77,516.33 825.02,528.53" fill-opacity="0.437"/><polygon points="853.06,515.14 882.36,503.57 885.14,504.74 855.84,516.36" fill-opacity="0.415"/><polygon points="882.28,503.54 910.24,492.50 913.18,493.67 885.22,504.77" fill-opacity="0.394"/><polygon points="910.17,492.47 936.88,481.92 939.97,483.11 913.26,493.71" fill-opacity="0.374"/><polygon points="936.80,481.89 962.35,471.81 965.59,473.00 940.05,483.14" fill-opacity="0.356"/><polygon points="962.26,471.78 986.72,462.13 990.12,463.33 965.68,473.03" fill-opacity="0.339"/><polygon points="986.63,462.10 1010.06,452.85 1013.63,454.06 990.21,463.36" fill-opacity="0.323"/><polygon points="1009.98,452.83 1032.45,443.96 1036.17,445.17 1013.72,454.09" fill-opacity="0.308"/><polygon points="1032.36,443.93 1053.93,435.42 1057.82,436.64 1036.26,445.20" fill-opacity="0.293"/><polygon points="602.22,314.06 618.07,319.39 622.81,318.44 606.93,313.14" fill-opacity="0.155"/><polygon points="618.15,319.38 634.58,324.91 639.19,323.95 622.72,318.46" fill-opacity="0.161"/><polygon points="634.67,324.89 651.71,330.62 656.18,329.67 639.10,323.97" fill-opacity="0.167"/><polygon points="651.79,330.61 669.49,336.56 673.82,335.61 656.10,329.69" fill-opacity="0.173"/><polygon points="669.57,336.54 687.96,342.73 692.16,341.78 673.74,335.63" fill-opacity="0.180"/><polygon points="688.04,342.71 707.16,349.14 711.22,348.19 692.08,341.79" fill-opacity="0.187"/><polygon points="707.23,349.13 727.13,355.82 731.06,354.86 711.14,348.21" fill-opacity="0.194"/><polygon points="727.20,355.80 747.92,362.76 751.72,361.81 730.98,354.88" fill-opacity="0.202"/><polygon points="747.99,362.75 769.59,370.01 773.26,369.05 751.65,361.83" fill-opacity="0.210"/><polygon points="769.66,369.99 792.18,377.56 795.72,376.60 773.18,369.06" fill-opacity="0.219"/><polygon points="792.25,377.54 815.77,385.45 819.18,384.48 795.65,376.62" fill-opacity="0.228"/><polygon points="815.84,385.43 840.41,393.69 843.70,392.72 819.11,384.50" fill-opacity="0.237"/><polygon points="840.48,393.67 866.19,402.31 869.35,401.34 843.63,392.74" fill-opacity="0.247"/><polygon points="866.23,402.30 893.15,411.35 896.24,410.35 869.31,401.35" fill-opacity="0.254"/><polygon points="893.19,411.33 921.41,420.82 924.43,419.80 896.20,410.36" fill-opacity="0.260"/><polygon points="921.45,420.81 951.07,430.76 954.01,429.72 924.39,419.81" fill-opacity="0.266"/><polygon points="951.11,430.75 982.24,441.21 985.10,440.14 953.98,429.73" fill-opacity="0.273"/><polygon points="982.27,441.19 1015.02,452.20 1017.80,451.10 985.06,440.15" fill-opacity="0.280"/><polygon points="1015.06,452.18 1049.56,463.78 1052.25,462.65 1017.76,451.11" fill-opacity="0.287"/><polygon points="1049.59,463.76 1085.99,475.99 1088.59,474.83 1052.21,462.66" fill-opacity="0.295"/><polygon points="1086.03,475.97 1124.48,488.89 1126.98,487.70 1088.55,474.84" fill-opacity="0.303"/><polygon points="1124.51,488.87 1165.20,502.54 1167.60,501.31 1126.95,487.71" fill-opacity="0.312"/><polygon points="1165.24,502.52 1208.37,517.01 1210.66,515.74 1167.57,501.33" fill-opacity="0.321"/><polygon points="1208.40,516.99 1254.19,532.37 1256.36,531.06 1210.62,515.76" fill-opacity="0.331"/><polygon points="318.16,778.84 381.44,752.00 382.76,753.47 319.39,780.42" fill-opacity="0.755"/><polygon points="381.42,751.97 440.38,726.96 441.81,728.38 382.78,753.49" fill-opacity="0.729"/><polygon points="440.35,726.94 495.41,703.58 496.96,704.96 441.83,728.41" fill-opacity="0.704"/><polygon points="495.38,703.56 546.92,681.70 548.57,683.03 496.98,704.98" fill-opacity="0.681"/><polygon points="546.89,681.68 595.23,661.18 596.98,662.47 548.60,683.05" fill-opacity="0.660"/><polygon points="595.21,661.16 640.64,641.89 642.48,643.14 597.01,662.49" fill-opacity="0.640"/><polygon points="640.61,641.87 683.39,623.73 685.32,624.94 642.51,643.16" fill-opacity="0.621"/><polygon points="683.36,623.71 723.72,606.60 725.72,607.78 685.35,624.96" fill-opacity="0.603"/><polygon points="723.69,606.58 761.82,590.41 763.90,591.56 725.75,607.79" fill-opacity="0.586"/><polygon points="761.76,590.38 797.84,575.08 800.06,576.23 763.96,591.59" fill-opacity="0.555"/><polygon points="797.77,575.05 831.97,560.55 834.33,561.70 800.12,576.26" fill-opacity="0.524"/><polygon points="831.90,560.51 864.35,546.76 866.86,547.92 834.40,561.74" fill-opacity="0.495"/><polygon points="864.28,546.72 895.12,533.65 897.78,534.82 866.93,547.95" fill-opacity="0.467"/><polygon points="895.05,533.62 924.39,521.18 927.20,522.36 897.85,534.85" fill-opacity="0.442"/><polygon points="924.32,521.15 952.27,509.30 955.24,510.48 927.28,522.39" fill-opacity="0.419"/><polygon points="952.19,509.27 978.86,497.97 981.98,499.16 955.32,510.52" fill-opacity="0.397"/><polygon points="978.78,497.94 1004.24,487.15 1007.52,488.35 982.07,499.19" fill-opacity="0.376"/><polygon points="1004.15,487.12 1028.49,476.81 1031.93,478.02 1007.61,488.38" fill-opacity="0.358"/><polygon points="1028.40,476.78 1051.69,466.92 1055.30,468.13 1032.02,478.05" fill-opacity="0.340"/><polygon points="627.40,309.14 643.43,314.30 648.16,313.34 632.11,308.22" fill-opacity="0.150"/><polygon points="643.51,314.28 660.11,319.62 664.71,318.67 648.08,313.36" fill-opacity="0.155"/><polygon points="660.19,319.60 677.41,325.14 681.87,324.19 664.63,318.68" fill-opacity="0.161"/><polygon points="677.49,325.12 695.35,330.87 699.68,329.92 681.80,324.21" fill-opacity="0.167"/><polygon points="695.43,330.85 713.97,336.82 718.17,335.86 699.60,329.93" fill-opacity="0.173"/><polygon points="714.05,336.80 733.32,342.99 737.38,342.04 718.10,335.88" fill-opacity="0.180"/><polygon points="733.39,342.98 753.43,349.42 757.36,348.46 737.31,342.06" fill-opacity="0.187"/><polygon points="753.50,349.40 774.35,356.10 778.15,355.14 757.29,348.48" fill-opacity="0.194"/><polygon points="774.42,356.08 796.13,363.06 799.81,362.10 778.08,355.16" fill-opacity="0.202"/><polygon points="796.20,363.04 818.83,370.32 822.38,369.35 799.74,362.12" fill-opacity="0.210"/><polygon points="818.89,370.30 842.50,377.88 845.92,376.91 822.31,369.37" fill-opacity="0.218"/><polygon points="842.56,377.86 867.21,385.78 870.51,384.81 845.86,376.93" fill-opacity="0.227"/><polygon points="867.26,385.77 893.01,394.05 896.23,393.06 870.46,384.82" fill-opacity="0.233"/><polygon points="893.05,394.04 920.00,402.69 923.14,401.68 896.19,393.07" fill-opacity="0.238"/><polygon points="920.03,402.68 948.25,411.75 951.32,410.71 923.10,401.69" fill-opacity="0.244"/><polygon points="948.29,411.74 977.87,421.24 980.86,420.18 951.28,410.72" fill-opacity="0.250"/><polygon points="977.91,421.23 1008.96,431.20 1011.87,430.11 980.83,420.19" fill-opacity="0.256"/><polygon points="1009.00,431.19 1041.63,441.67 1044.45,440.55 1011.83,430.13" fill-opacity="0.262"/><polygon points="1041.66,441.65 1075.99,452.68 1078.72,451.54 1044.41,440.57" fill-opacity="0.269"/><polygon points="1076.03,452.67 1112.20,464.28 1114.83,463.11 1078.69,451.55" fill-opacity="0.276"/><polygon points="1112.23,464.27 1150.39,476.52 1152.93,475.31 1114.80,463.12" fill-opacity="0.284"/><polygon points="1150.43,476.51 1190.75,489.45 1193.18,488.21 1152.89,475.33" fill-opacity="0.292"/><polygon points="1190.78,489.44 1233.45,503.14 1235.76,501.86 1193.14,488.23" fill-opacity="0.300"/><polygon points="1233.48,503.12 1278.70,517.64 1280.90,516.32 1235.73,501.87" fill-opacity="0.309"/><polygon points="352.68,823.09 418.22,793.09 419.52,794.54 353.90,824.66" fill-opacity="0.851"/><polygon points="418.19,793.06 479.01,765.22 480.43,766.62 419.54,794.57" fill-opacity="0.819"/><polygon points="478.98,765.19 535.57,739.29 537.09,740.64 480.45,766.65" fill-opacity="0.790"/><polygon points="535.54,739.27 588.33,715.11 589.95,716.42 537.12,740.67" fill-opacity="0.763"/><polygon points="588.30,715.08 637.65,692.50 639.37,693.76 589.98,716.44" fill-opacity="0.738"/><polygon points="637.62,692.47 683.87,671.31 685.67,672.54 639.40,693.78" fill-opacity="0.714"/><polygon points="683.84,671.29 727.26,651.42 729.14,652.61 685.70,672.56" fill-opacity="0.692"/><polygon points="727.23,651.40 768.07,632.71 770.04,633.86 729.17,652.63" fill-opacity="0.671"/><polygon points="768.02,632.68 806.52,615.06 808.60,616.21 770.09,633.89" fill-opacity="0.638"/><polygon points="806.45,615.02 842.80,598.40 845.03,599.55 808.67,616.25" fill-opacity="0.600"/><polygon points="842.73,598.36 877.09,582.64 879.47,583.80 845.10,599.59" fill-opacity="0.564"/><polygon points="877.02,582.60 909.57,567.71 912.09,568.88 879.54,583.84" fill-opacity="0.530"/><polygon points="909.49,567.68 940.36,553.56 943.04,554.74 912.17,568.92" fill-opacity="0.500"/><polygon points="940.28,553.52 969.59,540.12 972.43,541.30 943.12,554.77" fill-opacity="0.471"/><polygon points="969.51,540.08 997.39,527.33 1000.39,528.53 972.52,541.34" fill-opacity="0.445"/><polygon points="997.30,527.30 1023.85,515.16 1027.01,516.37 1000.47,528.57" fill-opacity="0.421"/><polygon points="1023.76,515.13 1049.06,503.56 1052.38,504.78 1027.09,516.40" fill-opacity="0.398"/><polygon points="1048.97,503.53 1073.12,492.49 1076.61,493.72 1052.48,504.81" fill-opacity="0.378"/><polygon points="651.75,304.38 667.93,309.37 672.67,308.42 656.46,303.46" fill-opacity="0.145"/><polygon points="668.01,309.35 684.77,314.52 689.37,313.56 672.59,308.43" fill-opacity="0.150"/><polygon points="684.85,314.50 702.21,319.85 706.68,318.90 689.29,313.58" fill-opacity="0.155"/><polygon points="702.29,319.83 720.29,325.38 724.63,324.42 706.60,318.91" fill-opacity="0.161"/><polygon points="720.37,325.36 739.05,331.12 743.25,330.16 724.55,324.44" fill-opacity="0.167"/><polygon points="739.12,331.10 758.51,337.07 762.59,336.11 743.17,330.18" fill-opacity="0.173"/><polygon points="758.59,337.05 778.74,343.26 782.68,342.30 762.51,336.13" fill-opacity="0.180"/><polygon points="778.81,343.24 799.76,349.69 803.58,348.73 782.61,342.32" fill-opacity="0.186"/><polygon points="799.83,349.68 821.63,356.39 825.32,355.42 803.51,348.75" fill-opacity="0.193"/><polygon points="821.70,356.37 844.41,363.36 847.97,362.39 825.25,355.44" fill-opacity="0.201"/><polygon points="844.47,363.34 868.14,370.63 871.58,369.66 847.90,362.41" fill-opacity="0.209"/><polygon points="868.19,370.61 892.88,378.21 896.22,377.23 871.53,369.67" fill-opacity="0.215"/><polygon points="892.92,378.20 918.70,386.13 921.96,385.13 896.18,377.24" fill-opacity="0.219"/><polygon points="918.73,386.12 945.67,394.42 948.87,393.39 921.93,385.14" fill-opacity="0.224"/><polygon points="945.71,394.40 973.90,403.08 977.02,402.02 948.83,393.40" fill-opacity="0.229"/><polygon points="973.93,403.07 1003.45,412.15 1006.49,411.07 976.98,402.04" fill-opacity="0.235"/><polygon points="1003.49,412.14 1034.44,421.66 1037.39,420.55 1006.46,411.08" fill-opacity="0.240"/><polygon points="1034.47,421.65 1066.96,431.64 1069.82,430.51 1037.36,420.57" fill-opacity="0.246"/><polygon points="1067.00,431.63 1101.13,442.13 1103.90,440.97 1069.79,430.52" fill-opacity="0.252"/><polygon points="1101.17,442.12 1137.09,453.17 1139.76,451.97 1103.87,440.98" fill-opacity="0.259"/><polygon points="1137.12,453.15 1174.97,464.79 1177.54,463.57 1139.73,451.99" fill-opacity="0.266"/><polygon points="1175.00,464.78 1214.94,477.06 1217.39,475.80 1177.51,463.58" fill-opacity="0.273"/><polygon points="1214.97,477.04 1257.16,490.02 1259.50,488.72 1217.36,475.82" fill-opacity="0.281"/><polygon points="1257.19,490.00 1301.84,503.73 1304.07,502.40 1259.47,488.74" fill-opacity="0.289"/><polygon points="391.45,872.79 459.34,839.04 460.65,840.50 392.68,874.37" fill-opacity="0.950"/><polygon points="459.33,839.02 522.05,807.84 523.45,809.22 460.66,840.51" fill-opacity="0.927"/><polygon points="522.02,807.81 580.14,778.92 581.64,780.25 523.47,809.25" fill-opacity="0.892"/><polygon points="580.12,778.89 634.12,752.05 635.72,753.34 581.67,780.28" fill-opacity="0.860"/><polygon points="634.09,752.03 684.41,727.02 686.10,728.26 635.75,753.36" fill-opacity="0.830"/><polygon points="684.38,727.00 731.37,703.64 733.14,704.85 686.12,728.29" fill-opacity="0.802"/><polygon points="731.34,703.62 775.32,681.76 777.17,682.93 733.17,704.87" fill-opacity="0.776"/><polygon points="775.28,681.74 816.54,661.23 818.48,662.38 777.21,682.96" fill-opacity="0.741"/><polygon points="816.47,661.19 855.24,641.93 857.34,643.08 818.55,662.42" fill-opacity="0.693"/><polygon points="855.17,641.89 891.68,623.75 893.93,624.91 857.41,643.12" fill-opacity="0.648"/><polygon points="891.61,623.71 926.05,606.60 928.45,607.77 894.00,624.95" fill-opacity="0.606"/><polygon points="925.97,606.56 958.51,590.40 961.07,591.58 928.53,607.81" fill-opacity="0.569"/><polygon points="958.43,590.36 989.23,575.06 991.94,576.26 961.15,591.62" fill-opacity="0.534"/><polygon points="989.14,575.03 1018.33,560.53 1021.20,561.74 992.03,576.29" fill-opacity="0.502"/><polygon points="1018.24,560.49 1045.94,546.74 1048.98,547.96 1021.29,561.77" fill-opacity="0.473"/><polygon points="1045.85,546.70 1072.18,533.64 1075.38,534.86 1049.07,547.99" fill-opacity="0.446"/><polygon points="675.31,299.78 691.63,304.61 696.37,303.65 680.02,298.86" fill-opacity="0.140"/><polygon points="691.71,304.59 708.60,309.58 713.20,308.63 696.29,303.67" fill-opacity="0.145"/><polygon points="708.67,309.57 726.16,314.74 730.63,313.78 713.12,308.65" fill-opacity="0.150"/><polygon points="726.24,314.72 744.36,320.08 748.70,319.12 730.56,313.80" fill-opacity="0.155"/><polygon points="744.44,320.06 763.23,325.62 767.44,324.66 748.63,319.14" fill-opacity="0.161"/><polygon points="763.30,325.60 782.80,331.36 786.88,330.40 767.37,324.68" fill-opacity="0.167"/><polygon points="782.87,331.35 803.12,337.33 807.07,336.37 786.81,330.42" fill-opacity="0.173"/><polygon points="803.19,337.31 824.22,343.53 828.05,342.56 807.00,336.38" fill-opacity="0.179"/><polygon points="824.29,343.51 846.16,349.97 849.86,349.00 827.98,342.58" fill-opacity="0.186"/><polygon points="846.23,349.95 868.99,356.68 872.56,355.71 849.80,349.02" fill-opacity="0.192"/><polygon points="869.05,356.66 892.75,363.66 896.22,362.68 872.51,355.72" fill-opacity="0.198"/><polygon points="892.79,363.65 917.50,370.95 920.89,369.95 896.18,362.69" fill-opacity="0.203"/><polygon points="917.53,370.94 943.31,378.55 946.63,377.53 920.86,369.96" fill-opacity="0.207"/><polygon points="943.34,378.54 970.26,386.49 973.51,385.44 946.60,377.54" fill-opacity="0.211"/><polygon points="970.30,386.48 998.43,394.79 1001.60,393.71 973.47,385.45" fill-opacity="0.216"/><polygon points="998.46,394.77 1027.90,403.46 1030.98,402.37 1001.56,393.73" fill-opacity="0.221"/><polygon points="1027.93,403.45 1058.76,412.55 1061.76,411.43 1030.95,402.38" fill-opacity="0.226"/><polygon points="1058.79,412.54 1091.12,422.08 1094.02,420.93 1061.72,411.44" fill-opacity="0.232"/><polygon points="1091.15,422.07 1125.08,432.08 1127.88,430.90 1093.99,420.95" fill-opacity="0.237"/><polygon points="1125.11,432.07 1160.76,442.59 1163.47,441.38 1127.85,430.92" fill-opacity="0.243"/><polygon points="1160.80,442.58 1198.31,453.65 1200.91,452.41 1163.44,441.40" fill-opacity="0.250"/><polygon points="1198.35,453.64 1237.88,465.30 1240.37,464.03 1200.88,452.43" fill-opacity="0.256"/><polygon points="1237.91,465.29 1279.62,477.60 1281.99,476.29 1240.33,464.04" fill-opacity="0.263"/><polygon points="1279.65,477.58 1323.72,490.58 1325.97,489.24 1281.96,476.30" fill-opacity="0.270"/><polygon points="435.24,928.93 505.57,890.69 507.05,892.34 436.64,930.73" fill-opacity="0.950"/><polygon points="505.57,890.69 570.22,855.53 571.75,857.05 507.05,892.34" fill-opacity="0.950"/><polygon points="570.22,855.53 629.85,823.11 631.43,824.52 571.75,857.05" fill-opacity="0.950"/><polygon points="629.85,823.11 685.02,793.11 686.63,794.41 631.43,824.52" fill-opacity="0.950"/><polygon points="685.01,793.10 736.21,765.27 737.87,766.49 686.64,794.42" fill-opacity="0.940"/><polygon points="736.18,765.24 783.82,739.34 785.55,740.52 737.90,766.51" fill-opacity="0.907"/><polygon points="783.78,739.32 828.22,715.16 830.04,716.31 785.59,740.55" fill-opacity="0.871"/><polygon points="828.15,715.12 869.70,692.53 871.66,693.69 830.11,716.35" fill-opacity="0.809"/><polygon points="869.62,692.49 908.56,671.32 910.67,672.49 871.74,693.73" fill-opacity="0.752"/><polygon points="908.48,671.28 945.03,651.41 947.31,652.59 910.75,672.54" fill-opacity="0.700"/><polygon points="944.95,651.37 979.34,632.68 981.77,633.87 947.39,652.64" fill-opacity="0.653"/><polygon points="979.26,632.64 1011.67,615.03 1014.26,616.23 981.86,633.92" fill-opacity="0.610"/><polygon points="1011.58,614.99 1042.18,598.37 1044.94,599.58 1014.35,616.27" fill-opacity="0.571"/><polygon points="1042.09,598.33 1071.03,582.61 1073.95,583.83 1045.03,599.62" fill-opacity="0.535"/><polygon points="1070.94,582.57 1098.34,567.69 1101.43,568.92 1074.05,583.87" fill-opacity="0.503"/></g><g fill="#56565a" style="filter:blur(0.8px)"><polygon points="135.26,468.39 146.66,480.89 151.19,479.83 139.69,467.38" fill-opacity="0.329"/><polygon points="146.79,480.86 158.85,494.08 163.21,493.02 151.06,479.86" fill-opacity="0.349"/><polygon points="158.98,494.05 171.75,508.04 175.95,506.98 163.09,493.05" fill-opacity="0.371"/><polygon points="171.88,508.01 185.43,522.85 189.46,521.79 175.82,507.01" fill-opacity="0.395"/><polygon points="185.55,522.81 199.95,538.58 203.82,537.53 189.34,521.82" fill-opacity="0.422"/><polygon points="200.08,538.55 215.41,555.33 219.12,554.28 203.70,537.56" fill-opacity="0.451"/><polygon points="215.53,555.29 231.89,573.19 235.44,572.15 219.00,554.31" fill-opacity="0.483"/><polygon points="232.01,573.16 249.51,592.29 252.89,591.25 235.32,572.18" fill-opacity="0.518"/><polygon points="249.63,592.25 268.37,612.75 271.60,611.71 252.77,591.28" fill-opacity="0.558"/><polygon points="268.49,612.71 288.63,634.73 291.69,633.69 271.48,611.75" fill-opacity="0.602"/><polygon points="288.74,634.69 310.44,658.40 313.34,657.37 291.58,633.73" fill-opacity="0.651"/><polygon points="310.55,658.36 333.98,683.96 336.73,682.93 313.23,657.41" fill-opacity="0.707"/><polygon points="526.84,894.01 571.41,942.67 573.87,941.19 529.24,892.68" fill-opacity="0.950"/><polygon points="161.92,435.13 173.14,445.83 177.91,444.78 166.60,434.13" fill-opacity="0.285"/><polygon points="173.27,445.80 185.08,457.06 189.69,456.01 177.79,444.81" fill-opacity="0.301"/><polygon points="185.21,457.03 197.67,468.90 202.11,467.86 189.57,456.04" fill-opacity="0.318"/><polygon points="197.79,468.87 210.95,481.40 215.23,480.36 201.99,467.89" fill-opacity="0.337"/><polygon points="211.07,481.37 224.98,494.62 229.11,493.58 215.11,480.39" fill-opacity="0.358"/><polygon points="225.11,494.59 239.84,508.61 243.80,507.57 228.98,493.61" fill-opacity="0.380"/><polygon points="239.96,508.58 255.59,523.45 259.39,522.42 243.68,507.61" fill-opacity="0.405"/><polygon points="255.71,523.42 272.33,539.22 275.96,538.19 259.27,522.45" fill-opacity="0.432"/><polygon points="272.44,539.19 290.14,556.01 293.61,554.99 275.85,538.23" fill-opacity="0.462"/><polygon points="290.25,555.98 309.13,573.92 312.45,572.90 293.50,555.02" fill-opacity="0.495"/><polygon points="309.24,573.89 329.42,593.07 332.59,592.05 312.33,572.94" fill-opacity="0.532"/><polygon points="329.54,593.03 351.17,613.59 354.17,612.57 332.47,592.09" fill-opacity="0.573"/><polygon points="351.28,613.55 374.52,635.63 377.36,634.62 354.06,612.61" fill-opacity="0.618"/><polygon points="184.88,406.46 195.86,415.72 200.88,414.68 189.81,405.47" fill-opacity="0.249"/><polygon points="195.98,415.70 207.50,425.41 212.36,424.37 200.75,414.71" fill-opacity="0.262"/><polygon points="207.62,425.38 219.72,435.58 224.42,434.54 212.23,424.40" fill-opacity="0.276"/><polygon points="219.84,435.55 232.57,446.27 237.10,445.24 224.30,434.57" fill-opacity="0.291"/><polygon points="232.69,446.24 246.08,457.52 250.46,456.49 236.98,445.26" fill-opacity="0.307"/><polygon points="246.20,457.49 260.33,469.39 264.54,468.36 250.34,456.52" fill-opacity="0.325"/><polygon points="260.45,469.36 275.36,481.92 279.42,480.89 264.42,468.39" fill-opacity="0.344"/><polygon points="275.48,481.89 291.25,495.16 295.15,494.14 279.30,480.92" fill-opacity="0.366"/><polygon points="291.37,495.13 308.07,509.18 311.81,508.17 295.03,494.17" fill-opacity="0.389"/><polygon points="308.19,509.15 325.91,524.06 329.49,523.05 311.70,508.20" fill-opacity="0.414"/><polygon points="326.03,524.03 344.86,539.87 348.28,538.86 329.38,523.08" fill-opacity="0.442"/><polygon points="344.97,539.84 365.03,556.70 368.30,555.69 348.17,538.89" fill-opacity="0.473"/><polygon points="365.14,556.67 386.55,574.66 389.66,573.65 368.19,555.73" fill-opacity="0.506"/><polygon points="386.65,574.62 409.54,593.86 412.50,592.86 389.55,573.69" fill-opacity="0.544"/><polygon points="215.68,389.56 226.87,398.02 231.98,397.00 220.71,388.58" fill-opacity="0.229"/><polygon points="226.99,398.00 238.71,406.85 243.66,405.83 231.86,397.02" fill-opacity="0.241"/><polygon points="238.83,406.83 251.11,416.10 255.90,415.08 243.54,405.85" fill-opacity="0.253"/><polygon points="251.23,416.08 264.11,425.80 268.74,424.78 255.78,415.11" fill-opacity="0.267"/><polygon points="264.22,425.78 277.75,435.99 282.22,434.98 268.62,424.81" fill-opacity="0.281"/><polygon points="277.87,435.97 292.10,446.71 296.41,445.69 282.11,435.00" fill-opacity="0.296"/><polygon points="292.21,446.68 307.20,457.99 311.35,456.97 296.30,445.72" fill-opacity="0.313"/><polygon points="307.31,457.96 323.11,469.88 327.11,468.87 311.24,457.00" fill-opacity="0.331"/><polygon points="323.22,469.85 339.90,482.43 343.74,481.42 326.99,468.90" fill-opacity="0.351"/><polygon points="340.01,482.40 357.66,495.70 361.34,494.70 343.63,481.45" fill-opacity="0.373"/><polygon points="357.77,495.67 376.45,509.76 379.98,508.76 361.23,494.73" fill-opacity="0.396"/><polygon points="376.56,509.73 396.38,524.67 399.76,523.68 379.87,508.79" fill-opacity="0.422"/><polygon points="396.49,524.64 417.56,540.52 420.78,539.53 399.65,523.71" fill-opacity="0.450"/><polygon points="255.34,381.82 267.18,389.92 272.23,388.91 260.31,380.85" fill-opacity="0.222"/><polygon points="267.30,389.90 279.67,398.37 284.56,397.36 272.11,388.93" fill-opacity="0.233"/><polygon points="279.79,398.35 292.75,407.22 297.48,406.21 284.45,397.38" fill-opacity="0.245"/><polygon points="292.87,407.19 306.45,416.48 311.02,415.48 297.37,406.23" fill-opacity="0.258"/><polygon points="306.56,416.46 320.81,426.20 325.23,425.20 310.91,415.50" fill-opacity="0.271"/><polygon points="320.92,426.18 335.89,436.41 340.15,435.41 325.11,425.23" fill-opacity="0.286"/><polygon points="336.00,436.39 351.74,447.15 355.84,446.15 340.04,435.44" fill-opacity="0.301"/><polygon points="351.85,447.12 368.42,458.45 372.37,457.45 355.73,446.18" fill-opacity="0.319"/><polygon points="368.53,458.42 386.01,470.37 389.81,469.37 372.27,457.48" fill-opacity="0.337"/><polygon points="386.12,470.34 404.57,482.95 408.21,481.96 389.70,469.40" fill-opacity="0.357"/><polygon points="404.68,482.92 424.19,496.25 427.68,495.26 408.11,481.98" fill-opacity="0.379"/><polygon points="424.30,496.22 444.97,510.34 448.31,509.35 427.58,495.29" fill-opacity="0.403"/><polygon points="293.37,374.39 305.79,382.16 310.78,381.16 298.29,373.43" fill-opacity="0.216"/><polygon points="305.90,382.14 318.88,390.26 323.71,389.26 310.67,381.18" fill-opacity="0.226"/><polygon points="318.99,390.23 332.56,398.72 337.24,397.72 323.60,389.28" fill-opacity="0.237"/><polygon points="332.67,398.70 346.88,407.58 351.40,406.59 337.13,397.75" fill-opacity="0.249"/><polygon points="346.99,407.56 361.88,416.87 366.25,415.87 351.29,406.61" fill-opacity="0.262"/><polygon points="361.99,416.84 377.61,426.61 381.83,425.62 366.14,415.90" fill-opacity="0.275"/><polygon points="377.72,426.58 394.13,436.84 398.19,435.85 381.72,425.64" fill-opacity="0.290"/><polygon points="394.23,436.81 411.49,447.59 415.40,446.61 398.08,435.87" fill-opacity="0.306"/><polygon points="411.59,447.57 429.77,458.92 433.53,457.93 415.30,446.63" fill-opacity="0.323"/><polygon points="429.87,458.89 449.03,470.86 452.64,469.88 433.42,457.96" fill-opacity="0.342"/><polygon points="449.13,470.83 469.37,483.47 472.83,482.49 452.54,469.90" fill-opacity="0.362"/><polygon points="329.86,367.26 342.81,374.72 347.75,373.73 334.74,366.31" fill-opacity="0.209"/><polygon points="342.92,374.70 356.43,382.48 361.22,381.49 347.64,373.75" fill-opacity="0.219"/><polygon points="356.54,382.46 370.66,390.59 375.30,389.60 361.11,381.51" fill-opacity="0.229"/><polygon points="370.77,390.57 385.53,399.07 390.02,398.09 375.19,389.63" fill-opacity="0.240"/><polygon points="385.64,399.05 401.10,407.95 405.43,406.97 389.91,398.11" fill-opacity="0.252"/><polygon points="401.21,407.93 417.41,417.25 421.59,416.27 405.33,406.99" fill-opacity="0.265"/><polygon points="417.51,417.23 434.51,427.01 438.54,426.03 421.48,416.29" fill-opacity="0.279"/><polygon points="434.61,426.99 452.47,437.26 456.35,436.28 438.44,426.06" fill-opacity="0.294"/><polygon points="452.57,437.23 471.35,448.04 475.08,447.06 456.25,436.31" fill-opacity="0.310"/><polygon points="364.91,360.41 378.33,367.58 383.24,366.59 369.75,359.47" fill-opacity="0.202"/><polygon points="378.44,367.56 392.44,375.03 397.19,374.05 383.13,366.62" fill-opacity="0.211"/><polygon points="392.54,375.01 407.15,382.81 411.75,381.82 397.08,374.07" fill-opacity="0.221"/><polygon points="407.26,382.78 422.52,390.93 426.97,389.95 411.65,381.85" fill-opacity="0.232"/><polygon points="422.63,390.91 438.59,399.43 442.89,398.45 426.87,389.97" fill-opacity="0.243"/><polygon points="438.69,399.40 455.41,408.32 459.56,407.34 442.79,398.47" fill-opacity="0.255"/><polygon points="455.51,408.30 473.03,417.64 477.03,416.67 459.46,407.37" fill-opacity="0.268"/><polygon points="473.13,417.61 491.51,427.42 495.36,426.45 476.93,416.69" fill-opacity="0.282"/><polygon points="398.60,353.83 412.45,360.72 417.32,359.74 403.41,352.89" fill-opacity="0.196"/><polygon points="412.55,360.70 426.98,367.88 431.70,366.90 417.21,359.76" fill-opacity="0.204"/><polygon points="427.09,367.86 442.14,375.34 446.71,374.37 431.60,366.92" fill-opacity="0.214"/><polygon points="442.24,375.32 457.95,383.13 462.37,382.16 446.60,374.39" fill-opacity="0.224"/><polygon points="458.05,383.11 474.47,391.27 478.74,390.30 462.27,382.18" fill-opacity="0.234"/><polygon points="474.57,391.25 491.74,399.78 495.86,398.81 478.64,390.32" fill-opacity="0.246"/><polygon points="491.83,399.76 509.81,408.69 513.78,407.72 495.76,398.83" fill-opacity="0.258"/><polygon points="431.01,347.50 445.25,354.13 450.08,353.16 435.79,346.57" fill-opacity="0.189"/><polygon points="445.35,354.11 460.17,361.01 464.85,360.04 449.98,353.18" fill-opacity="0.198"/><polygon points="460.27,360.99 475.71,368.18 480.25,367.21 464.76,360.06" fill-opacity="0.206"/><polygon points="475.81,368.16 491.92,375.65 496.31,374.69 480.15,367.23" fill-opacity="0.216"/><polygon points="492.01,375.63 508.83,383.46 513.08,382.49 496.21,374.71" fill-opacity="0.226"/><polygon points="462.21,341.41 476.79,347.79 481.60,346.82 466.97,340.48" fill-opacity="0.183"/><polygon points="476.89,347.77 492.06,354.41 496.72,353.44 481.50,346.84" fill-opacity="0.191"/><polygon points="492.15,354.39 507.95,361.30 512.47,360.33 496.63,353.46" fill-opacity="0.199"/><polygon points="508.05,361.28 524.51,368.48 528.88,367.52 512.37,360.35" fill-opacity="0.208"/><polygon points="492.27,335.54 507.16,341.69 511.95,340.72 497.01,334.61" fill-opacity="0.177"/><polygon points="507.25,341.67 522.73,348.06 527.38,347.10 511.85,340.74" fill-opacity="0.185"/><polygon points="1035.77,415.48 1055.85,408.07 1060.03,409.29 1039.96,416.75" fill-opacity="0.256"/><polygon points="1055.76,408.04 1075.11,400.90 1079.45,402.13 1060.12,409.31" fill-opacity="0.245"/><polygon points="1053.84,435.39 1074.56,427.22 1078.61,428.45 1057.91,436.67" fill-opacity="0.280"/><polygon points="1074.46,427.19 1094.38,419.34 1098.60,420.57 1078.70,428.48" fill-opacity="0.268"/><polygon points="1094.29,419.31 1113.45,411.75 1117.84,413.00 1098.70,420.60" fill-opacity="0.256"/><polygon points="1051.60,466.88 1073.90,457.44 1077.67,458.67 1055.39,468.16" fill-opacity="0.323"/><polygon points="1073.81,457.41 1095.19,448.36 1099.13,449.59 1077.77,458.70" fill-opacity="0.308"/><polygon points="1095.09,448.33 1115.61,439.65 1119.71,440.89 1099.22,449.62" fill-opacity="0.294"/><polygon points="1115.51,439.62 1135.21,431.28 1139.48,432.53 1119.81,440.92" fill-opacity="0.280"/><polygon points="1135.11,431.25 1154.04,423.24 1158.49,424.50 1139.58,432.56" fill-opacity="0.268"/><polygon points="1073.03,492.46 1096.10,481.92 1099.75,483.15 1076.70,493.75" fill-opacity="0.358"/><polygon points="1096.00,481.88 1118.07,471.80 1121.89,473.05 1099.85,483.18" fill-opacity="0.340"/><polygon points="1117.97,471.77 1139.09,462.12 1143.08,463.38 1121.99,473.08" fill-opacity="0.324"/><polygon points="1138.99,462.09 1159.23,452.85 1163.39,454.11 1143.18,463.41" fill-opacity="0.308"/><polygon points="1159.13,452.82 1178.54,443.95 1182.87,445.22 1163.50,454.14" fill-opacity="0.294"/><polygon points="1178.43,443.92 1197.06,435.42 1201.58,436.69 1182.98,445.25" fill-opacity="0.280"/><polygon points="1072.09,533.60 1097.14,521.17 1100.51,522.40 1075.48,534.90" fill-opacity="0.422"/><polygon points="1097.04,521.13 1120.91,509.29 1124.45,510.53 1100.61,522.44" fill-opacity="0.399"/><polygon points="1120.81,509.25 1143.58,497.96 1147.29,499.21 1124.55,510.56" fill-opacity="0.378"/><polygon points="1143.48,497.92 1165.22,487.14 1169.10,488.40 1147.39,499.24" fill-opacity="0.358"/><polygon points="1165.11,487.10 1185.89,476.80 1189.95,478.07 1169.20,488.43" fill-opacity="0.340"/><polygon points="1185.79,476.76 1205.67,466.90 1209.90,468.19 1190.06,478.10" fill-opacity="0.323"/><polygon points="1205.56,466.87 1224.61,457.43 1229.02,458.72 1210.01,468.22" fill-opacity="0.307"/><polygon points="1224.50,457.40 1242.75,448.35 1247.34,449.65 1229.13,458.75" fill-opacity="0.293"/><polygon points="1098.25,567.65 1124.24,553.53 1127.50,554.78 1101.53,568.96" fill-opacity="0.473"/><polygon points="1124.14,553.50 1148.83,540.09 1152.26,541.35 1127.60,554.82" fill-opacity="0.446"/><polygon points="1148.73,540.06 1172.21,527.31 1175.81,528.58 1152.36,541.39" fill-opacity="0.421"/><polygon points="1172.10,527.28 1194.46,515.14 1198.24,516.42 1175.91,528.62" fill-opacity="0.398"/><polygon points="1194.35,515.11 1215.66,503.54 1219.62,504.83 1198.34,516.46" fill-opacity="0.377"/><polygon points="1215.56,503.51 1235.90,492.48 1240.03,493.77 1219.73,504.87" fill-opacity="0.357"/><polygon points="1235.78,492.44 1255.22,481.90 1259.53,483.21 1240.14,493.81" fill-opacity="0.339"/><polygon points="1255.10,481.87 1273.69,471.79 1278.18,473.10 1259.64,483.24" fill-opacity="0.322"/><polygon points="1273.58,471.75 1291.37,462.11 1296.04,463.43 1278.30,473.14" fill-opacity="0.306"/></g><g fill="#56565a" style="filter:blur(1.2px)"><polygon points="85.78,414.94 94.58,424.61 99.93,423.54 91.02,413.91" fill-opacity="0.251"/><polygon points="94.72,424.59 103.96,434.74 109.15,433.67 99.80,423.56" fill-opacity="0.264"/><polygon points="104.10,434.72 113.82,445.39 118.85,444.32 109.02,433.70" fill-opacity="0.279"/><polygon points="113.96,445.37 124.20,456.60 129.06,455.53 118.71,444.35" fill-opacity="0.294"/><polygon points="124.33,456.57 135.13,468.42 139.82,467.35 128.92,455.56" fill-opacity="0.311"/><polygon points="131.02,406.10 140.70,415.34 145.97,414.29 136.19,405.09" fill-opacity="0.244"/><polygon points="140.83,415.32 150.99,425.01 156.09,423.95 145.84,414.31" fill-opacity="0.256"/><polygon points="151.12,424.98 161.79,435.16 166.73,434.11 155.96,423.98" fill-opacity="0.270"/><polygon points="174.28,397.65 184.75,406.49 189.94,405.45 179.37,396.66" fill-opacity="0.237"/></g></svg><svg style="left:0;top:0" width="1307" height="896"><defs>
<pattern id="hat" patternUnits="userSpaceOnUse" width="3" height="3" patternTransform="rotate(18)"><rect width="3" height="3" fill="#0f600f"/><rect y="0" width="3" height="2.1" fill="#000"/></pattern>
<pattern id="vs" patternUnits="userSpaceOnUse" width="4" height="4" patternTransform="skewX(6)"><rect width="4" height="4" fill="#168016"/><rect x="0" width="1.6" height="4" fill="#000"/></pattern>
<pattern id="vs2" patternUnits="userSpaceOnUse" width="3.6" height="4" patternTransform="skewX(-8)"><rect width="3.6" height="4" fill="#178417"/><rect x="0" width="1.4" height="4" fill="#000"/></pattern>
<pattern id="cyl" patternUnits="userSpaceOnUse" width="4.5" height="8"><rect width="4.5" height="8" fill="#158015"/><path d="M0 0 L4.5 8" stroke="#000" stroke-width="1.2"/><rect x="0" width="1.1" height="8" fill="#000"/><rect y="0" width="4.5" height="1.2" fill="#000"/></pattern>
</defs><polygon points="620.9,368.3 636.6,366.7 650.8,373.8 650.8,417.9 624.8,407.6 623.4,375.7" fill="url(#hat)" stroke="#000" stroke-width="1.6" stroke-linejoin="round"/><polygon points="650.0,350.2 657.0,347.2 663.4,346.2 671.0,347.0 681.5,350.2 681.5,387.0 650.0,383.2" fill="url(#vs)" stroke="#000" stroke-width="1.4" stroke-linejoin="round"/><path d="M650.0 352.5L681.5 353.0" stroke="#000" stroke-width="1.6" opacity="1" fill="none"/><polygon points="650.0,383.2 681.5,386.4 701.2,391.9 701.2,427.3 650.0,421.0" fill="#188c18" stroke="#000" stroke-width="1.2" stroke-linejoin="round"/><path d="M661.0 384.0L661.0 422.0M650.0 396.0L661.0 406.0M661.0 406.0L650.0 414.0M667.0 385.0L661.0 406.0M667.0 402.0L701.0 404.0M667.0 402.0L667.0 423.0M667.0 402.0L701.0 392.0M667.0 423.0L701.0 406.0M661.0 406.0L667.0 402.0M653.0 385.0L657.0 421.0" stroke="#000" stroke-width="1.0" opacity="1" fill="none"/><polygon points="556.2,382.1 568.4,379.2 582.3,386.7 582.8,433.6 561.4,424.4 558.0,395.4" fill="url(#hat)" stroke="#000" stroke-width="1.6" stroke-linejoin="round"/><polygon points="581.1,365.3 590.0,363.0 599.6,362.4 610.6,365.3 610.6,404.0 597.3,405.0 597.3,455.1 589.2,453.9 583.4,442.9" fill="url(#vs2)" stroke="#000" stroke-width="1.4" stroke-linejoin="round"/><path d="M581.0 368.0L611.0 367.5" stroke="#000" stroke-width="1.6" opacity="1" fill="none"/><polygon points="701.2,392.7 716.9,391.9 742.1,394.2 750.8,399.0 750.0,421.0 749.2,468.2 742.1,475.3 726.4,478.5 707.5,474.5 701.2,468.2" fill="url(#cyl)" stroke="#000" stroke-width="1.4" stroke-linejoin="round"/><ellipse cx="725.5" cy="406" rx="20" ry="6" fill="none" stroke="#000" stroke-width="1.6"/><ellipse cx="725.5" cy="430" rx="20" ry="5" fill="none" stroke="#000" stroke-width="1.6"/><ellipse cx="725.5" cy="458" rx="20" ry="5" fill="none" stroke="#000" stroke-width="1.6"/><ellipse cx="725" cy="413" rx="12" ry="3" fill="#000" opacity="0.75"/><ellipse cx="725" cy="440" rx="12" ry="3" fill="#000" opacity="0.75"/><ellipse cx="725" cy="463" rx="12" ry="3" fill="#000" opacity="0.75"/><polygon points="597.3,405.0 610.6,403.5 627.0,417.0 643.0,439.0 601.0,430.0" fill="url(#vs2)" stroke="#000" stroke-width="1.2" stroke-linejoin="round"/><polygon points="599.2,424.1 627.6,418.6 651.2,421.8 703.1,428.9 703.1,450.9 692.1,454.8 666.9,455.6 619.7,449.3 599.2,446.2" fill="#137a13" stroke="#000" stroke-width="1.3" stroke-linejoin="round"/><polygon points="599.2,424.1 627.6,418.6 651.2,421.8 703.1,428.9 703.1,433.6 666.9,436.7 619.7,431.4 599.2,430.4" fill="url(#hat)" stroke="#000" stroke-width="0.8" stroke-linejoin="round"/><polygon points="599.2,430.4 619.7,431.4 619.7,449.3 599.2,446.2" fill="url(#vs)" stroke="#000" stroke-width="0.8" stroke-linejoin="round"/><polygon points="666.9,436.7 703.1,433.6 703.1,450.9 692.1,454.8 666.9,455.6" fill="url(#vs)" stroke="#000" stroke-width="0.8" stroke-linejoin="round"/><path d="M619.7 431.4L666.9 455.6M619.7 439.0L666.9 446.0M641.0 434.0L666.9 436.7" stroke="#000" stroke-width="1.0" opacity="1" fill="none"/><polygon points="598.9,446.0 619.7,449.3 648.0,458.8 666.9,460.3 703.1,466.6 703.1,482.4 692.1,490.0 666.9,493.4 619.7,488.0 599.2,482.4" fill="#137a13" stroke="#000" stroke-width="1.3" stroke-linejoin="round"/><polygon points="648.0,458.8 666.9,460.3 703.1,466.6 703.1,472.9 666.9,474.5 648.0,474.5" fill="url(#hat)" stroke="#000" stroke-width="0.8" stroke-linejoin="round"/><polygon points="598.9,446.0 619.7,449.3 648.0,458.8 648.0,474.5 641.0,488.0 619.7,488.0 599.2,482.4" fill="url(#vs)" stroke="#000" stroke-width="0.8" stroke-linejoin="round"/><polygon points="666.9,474.5 703.1,472.9 703.1,482.4 692.1,490.0 666.9,493.4" fill="url(#vs)" stroke="#000" stroke-width="0.8" stroke-linejoin="round"/><path d="M648.0 474.5L666.9 493.4M631.0 478.0L666.9 478.0" stroke="#000" stroke-width="1.0" opacity="1" fill="none"/></svg><div class="a" style="left:5px;top:5px;width:114px;height:38px;background:#808084"></div><div class="a" style="left:8px;top:8px;width:32px;height:32px;border:1px solid #f0f0f0"></div></div>
<svg style="left:0;top:0" width="740" height="140">
<path d="M630.7 109.24 A9.2 9.2 0 0 0 627.7 126.27" fill="none" stroke="#fff" stroke-width="3.4"/>
<path d="M633.9 127.36 A9.2 9.2 0 0 0 636.9 110.33" fill="none" stroke="#fff" stroke-width="3.4"/>
<path d="M632.6 128.6 L625.6 130.3 L629.9 122.6 Z" fill="#fff"/>
<path d="M632.0 108.0 L639.0 106.3 L634.7 114.0 Z" fill="#fff"/>
</svg>
<svg style="left:656px;top:103px" width="30" height="30" viewBox="0 0 30 30">
<path d="M15 4 V26 M4 15 H26" stroke="#fff" stroke-width="2"/>
<path d="M15 1 L11.5 6 H18.5 Z M15 29 L11.5 24 H18.5 Z M1 15 L6 11.5 V18.5 Z M29 15 L24 11.5 V18.5 Z" fill="#fff"/>
</svg>
<svg style="left:0;top:0" width="740" height="140">
<path d="M700.1 110.8 L708.9 107.3 L717.6 110.6 L717.6 111.3 L712 111.3 L713.6 122.9 L722 122.9 L708.9 129.8 L695.75 122.9 L703.9 122.9 L705.4 111.3 L700.1 111.3 Z" fill="#fff"/>
</svg>
<svg style="left:0;top:0" width="660" height="1040">
<path d="M618.3 1019 L634 1011.5 L649.7 1019 L634 1027 Z" fill="#fff"/>
<path d="M629.6 1000.8 Q638.8 1002 638 1010.2 L641 1010.2 L634.5 1018.4 L628 1010.2 L631.6 1010.2 Q632.2 1004.5 629.6 1000.8 Z" fill="#fff" stroke="#444" stroke-width="1.2" stroke-linejoin="miter"/>
</svg>
<div class="t" style="left:650.4px;top:1005.38px;font-size:16px;color:#fff;">Insert</div>
<svg style="left:0;top:0" width="740" height="1035" viewBox="0 0 740 1035">
<path d="M709.7 1022 L712.6 1014.2 L721.6 1005.8 L726.2 1010.3 L717.4 1018.8 Z" fill="#fff"/>
<path d="M716.9 1014.8 L723.2 1008.9" stroke="#444" stroke-width="1.7"/>
<path d="M712.3 1016.6 L714.3 1018.8 L716.6 1017.8" stroke="#444" stroke-width="0.9" fill="none"/>
<path d="M722.8 1004.7 Q725 1002.2 727.8 1003 Q730.2 1004.8 729.2 1008 Q728.6 1009.2 727.6 1009.4 Z" fill="#fff"/>
</svg>
<div class="t" style="left:735.4px;top:1005.38px;font-size:16px;color:#fff;">Edit</div>
<div class="t" style="left:779.6px;top:1005.38px;font-size:16px;color:#fff;">Export...</div>
<div class="a" style="left:0;top:1040px;width:1920px;height:40px;background:linear-gradient(105deg,#2c2c2c 0px,#2e2e2e 400px,#343434 700px,#333 900px,#353535 980px,#3e3e3e 1060px,#3c3c3c 1380px,#313131 1450px,#323232 1490px,#3d3d3d 1560px,#393939 1700px,#2c2c2c 1800px,#2a2a2a 1920px)"></div>
<div class="a" style="left:0;top:1040px;width:1920px;height:1px;background:#111"></div>
<div class="a" style="left:0;top:1041px;width:1920px;height:1px;background:#6a6a6a"></div>
<div class="a" style="left:432px;top:1041px;width:58px;height:38px;border-radius:3px;border:1px solid #9a9a9a;box-shadow:0 0 0 1px #111;background:linear-gradient(160deg,#7a7a7a 0%,#555 30%,#3c3c3c 55%,#353535 100%)"></div><div class="a" style="left:494px;top:1041px;width:58px;height:38px;border-radius:3px;border:1px solid #9a9a9a;box-shadow:0 0 0 1px #111;background:linear-gradient(160deg,#7a7a7a 0%,#555 30%,#3c3c3c 55%,#353535 100%)"></div><div class="a" style="left:680px;top:1041px;width:58px;height:38px;border-radius:3px;border:1px solid #9a9a9a;box-shadow:0 0 0 1px #111;background:linear-gradient(160deg,#7a7a7a 0%,#555 30%,#3c3c3c 55%,#353535 100%)"></div><div class="a" style="left:742px;top:1041px;width:54px;height:38px;border-radius:3px;border:1px solid #f2f2f2;box-shadow:0 0 0 1px #111;background:linear-gradient(100deg,#d8d8d8 0%,#b4b4b4 40%,#a2a2a2 100%)"></div><div class="a" style="left:796px;top:1041px;width:4px;height:38px;border-radius:0 3px 3px 0;border:1px solid #8a8a8a;background:#555"></div><svg style="left:0;top:1036px" width="50" height="44" viewBox="0 1036 50 44">
<defs><linearGradient id="orb" x1="0" y1="0" x2="0" y2="1"><stop offset="0" stop-color="#e4ecf2"/><stop offset="0.45" stop-color="#5f8db5"/><stop offset="0.5" stop-color="#0b4f8f"/><stop offset="0.8" stop-color="#0a7cc0"/><stop offset="1" stop-color="#10d8f8"/></linearGradient></defs>
<circle cx="27" cy="1060" r="18.2" fill="url(#orb)" stroke="#8a8a8a" stroke-width="1"/>
<path d="M18.7 1051.1 Q23.5 1049.3 28.7 1050.7 L27.2 1058.5 Q22.5 1057 17.8 1058.1 Z" fill="#f0641e"/>
<path d="M29.1 1052.2 Q34 1053.5 39.1 1052.6 L36.9 1060.7 Q32.2 1061.5 27.8 1059.3 Z" fill="#8cc43c"/>
<path d="M16.9 1059.6 Q21.5 1058.5 26.1 1060 L24.3 1067.8 Q19.8 1066.4 15 1067.4 Z" fill="#2a9ae0"/>
<path d="M26.9 1061.5 Q31.8 1063 36.5 1062.2 L34.3 1070.4 Q29.8 1071 25.2 1069.3 Z" fill="#fcc22a"/>
</svg><svg style="left:72px;top:1045px" width="34" height="31" viewBox="0 0 34 31">
<path d="M1 4 H12 L14 6 H31 V27 H1 Z" fill="#d9b65a"/>
<rect x="2.5" y="2.5" width="10" height="4" fill="#f5f0d8"/><rect x="3.5" y="3" width="2" height="2" fill="#2fae2f"/>
<rect x="11" y="5" width="11" height="4" fill="#f5f0d8"/><rect x="12" y="5.5" width="2" height="2" fill="#d02a2a"/>
<rect x="19" y="7" width="11" height="4" fill="#f5f0d8"/><rect x="20" y="7.5" width="2" height="2" fill="#2a8ad0"/>
<path d="M1 11 H32 L31 28 H2 Z" fill="#f3dc8e"/>
<path d="M5 16 H26 V29 H22 V22 H9 V29 H5 Z" fill="#8fd0ef" stroke="#4a9ad0" stroke-width="0.8"/>
</svg><svg style="left:136px;top:1048px" width="28" height="26" viewBox="0 0 28 26">
<rect x="6" y="1" width="21" height="23" fill="#8ab4d6" stroke="#5a86aa" stroke-width="0.8"/>
<rect x="1" y="0.5" width="22" height="24" fill="#a9cce6" stroke="#5a86aa" stroke-width="0.8"/>
<circle cx="11.5" cy="12.5" r="8.5" fill="#f07a1a"/>
<path d="M9 7.5 L17 12.5 L9 17.5 Z" fill="#fff"/>
</svg><svg style="left:197px;top:1044px" width="31" height="31" viewBox="0 0 31 31">
<defs><linearGradient id="op" x1="0" y1="0" x2="0" y2="1"><stop offset="0" stop-color="#ff3a3a"/><stop offset="1" stop-color="#9a0000"/></linearGradient></defs>
<ellipse cx="15.5" cy="15" rx="14" ry="14.5" fill="url(#op)"/>
<ellipse cx="15.8" cy="15.3" rx="5.4" ry="11.2" fill="#333" stroke="#f05050" stroke-width="0.9"/>
</svg><svg style="left:0;top:1030px" width="300" height="50" viewBox="0 1030 300 50">
<defs><linearGradient id="ja" x1="0" y1="0" x2="1" y2="1"><stop offset="0" stop-color="#ffc21a"/><stop offset="0.6" stop-color="#f7860f"/><stop offset="1" stop-color="#e8581a"/></linearGradient></defs>
<ellipse cx="276.5" cy="1055" rx="14.5" ry="8" transform="rotate(-25 276.5 1055)" fill="url(#ja)"/>
<ellipse cx="273.5" cy="1058" rx="8.5" ry="3.6" transform="rotate(-22 273.5 1058)" fill="#2b2b2b"/>
<ellipse cx="269.5" cy="1066" rx="9" ry="5.2" transform="rotate(-28 269.5 1066)" fill="#f99212"/>
<ellipse cx="267" cy="1064" rx="4" ry="1.5" transform="rotate(-28 267 1064)" fill="#ffd23a" opacity="0.7"/>
</svg><svg style="left:320px;top:1047px" width="34" height="26" viewBox="0 0 34 26">
<rect x="3" y="6" width="3.5" height="3.5" fill="#f2b20c" transform="rotate(20 4.7 7.7)"/>
<rect x="9.5" y="1" width="3.5" height="3.5" fill="#f2b20c"/>
<rect x="17" y="0.5" width="3.5" height="3.5" fill="#f2b20c" transform="rotate(45 18.7 2.2)"/>
<rect x="26" y="5" width="3.5" height="3.5" fill="#f2b20c" transform="rotate(30 27.7 6.7)"/>
<path d="M3 15 Q15 4 29 14 Q18 25 3 15 Z" fill="none" stroke="#f2b20c" stroke-width="2.5"/>
<circle cx="15.5" cy="15" r="5" fill="#d42a1a"/><circle cx="15.5" cy="15" r="2" fill="none" stroke="#f2b20c" stroke-width="1"/>
</svg><svg style="left:387px;top:1043px" width="24" height="32" viewBox="0 0 24 32">
<path d="M2 1 H19 V21 L10.5 30 L2 21 Z" fill="#fff" stroke="#111" stroke-width="1"/>
<rect x="5" y="2.5" width="11" height="13" fill="#3d8ab8"/><rect x="8" y="2.5" width="3" height="13" fill="#8fd0ef"/>
<path d="M5.5 19 H15.5 L10.5 25 Z" fill="#2f7fb8"/>
<path d="M20 3 V21.5 L11 31" fill="none" stroke="#555" stroke-width="1.5"/>
</svg><svg style="left:0;top:1030px" width="500" height="50" viewBox="0 1030 500 50">
<defs><radialGradient id="ffb" cx="0.45" cy="0.2" r="0.8"><stop offset="0" stop-color="#5ccdf5"/><stop offset="0.5" stop-color="#1e6fc0"/><stop offset="1" stop-color="#0c2a6a"/></radialGradient>
<linearGradient id="ffo" x1="0.2" y1="1" x2="0.9" y2="0.1"><stop offset="0" stop-color="#e0401c"/><stop offset="0.55" stop-color="#f57a1a"/><stop offset="1" stop-color="#ffe02a"/></linearGradient></defs>
<circle cx="462.5" cy="1057.5" r="12.5" fill="url(#ffb)"/>
<path d="M449 1050 Q446 1058 449 1066 Q454 1075 463 1075.5 Q473 1075 477 1066 Q480 1058 476.5 1050 Q478 1060 473 1066 Q468 1071 461 1069 Q456 1067 456 1062 Q459 1065 463 1064 Q460 1062 459 1059 Q457 1056 460 1053 Q458 1050 455 1051 L452.5 1045 Q450 1047 449 1050 Z" fill="url(#ffo)"/>
</svg><svg style="left:506px;top:1043px" width="33" height="33" viewBox="0 0 33 33">
<rect x="1" y="1" width="31" height="31" rx="1.5" fill="#1f4fd0"/>
<rect x="9.5" y="1" width="14" height="10.5" fill="#d6d6d6"/><rect x="17" y="2.5" width="3.5" height="7.5" fill="#1f4fd0"/>
<rect x="5" y="15.5" width="23" height="16.5" fill="#fff"/>
<path d="M6.5 19 H26.5 M6.5 22.8 H26.5 M6.5 26.6 H26.5" stroke="#d41a1a" stroke-width="1"/>
<rect x="5" y="30.5" width="23" height="1.5" fill="#b33"/>
</svg><svg style="left:0;top:1030px" width="620" height="50" viewBox="0 1030 620 50">
<circle cx="589" cy="1060.3" r="10.8" fill="#f5851f"/>
<path d="M570 1065 L583 1056 M574 1053.5 L585 1053.5 M580 1050 L587 1046" stroke="#f5851f" stroke-width="3.6" stroke-linecap="round"/>
<circle cx="590" cy="1060" r="7.2" fill="#fff"/><circle cx="590.5" cy="1059.8" r="4.3" fill="#1f4f8f"/>
</svg><svg style="left:630px;top:1044px" width="34" height="33" viewBox="0 0 34 33">
<path d="M1 8 L8 1 H33 L26 8 Z" fill="#3a6ab0"/>
<path d="M26 8 L33 1 V25 L26 32 Z" fill="#2f8a2f"/>
<rect x="1" y="8" width="25" height="24" fill="#b8342a"/>
<rect x="3.5" y="10.5" width="20" height="19" fill="#e6c98a"/>
<text x="13.5" y="28" font-family="Liberation Sans" font-weight="bold" font-size="20" fill="#b8342a" text-anchor="middle">R</text>
<text x="29.5" y="20" font-family="Liberation Sans" font-weight="bold" font-size="10" fill="#e6c98a" text-anchor="middle">P</text>
</svg><svg style="left:693px;top:1044px" width="31" height="31" viewBox="0 0 31 31">
<rect x="1" y="1" width="29" height="29" rx="2" fill="#d8e8f8"/>
<rect x="4" y="1" width="1.6" height="8" fill="#e23"/><rect x="5.6" y="1" width="1.6" height="8" fill="#fb2"/><rect x="7.2" y="1" width="1.6" height="8" fill="#3c3"/><rect x="8.8" y="1" width="1.6" height="8" fill="#39f"/><rect x="10.4" y="1" width="1.6" height="8" fill="#a3f"/>
<path d="M3 14 Q14 6 27 13 Q15 21 3 14 Z" fill="#4a9ae0" stroke="#1f5f9f" stroke-width="1"/><circle cx="15" cy="13.5" r="3.2" fill="#0f3f7f"/>
<rect x="12" y="19" width="18" height="10" fill="#e8321a"/>
<text x="21" y="27.3" font-family="Liberation Sans" font-weight="bold" font-size="8" fill="#fff" text-anchor="middle">PDF</text>
</svg><svg style="left:753px;top:1045px" width="30" height="30" viewBox="0 0 30 30"><defs><linearGradient id="mcg" x1="0" y1="0" x2="0" y2="1"><stop offset="0" stop-color="#62a4ad"/><stop offset="1" stop-color="#2a6c78"/></linearGradient></defs><rect x="0" y="0" width="30" height="30" fill="url(#mcg)"/></svg><svg style="left:757px;top:1052px" width="23" height="16.3" viewBox="268.5 649.5 58 40.5" preserveAspectRatio="none"><g fill="#e6f2f2"><path d="M272.2 657 L279.6 664.1 L279.6 681.9 L272.2 681.9 Z" fill-opacity="0.75"/><path d="M268.9 650 L275.6 650 L288.5 663 L296.3 655.2 L304.8 655.2 L304.8 689.6 L297 689.6 L297 661.9 L288.5 669.6 Z"/><path d="M307 655.2 L325.9 655.2 L325.9 659.3 L315 659.3 L315 678 L325.9 678 L325.9 682.2 L307 682.2 Z"/></g></svg><div class="t" style="left:1685.5px;top:1052.5px;font-size:11px;color:#f0f0f0">CS</div><svg style="left:1716px;top:1058px" width="10" height="6"><path d="M0.5 5.5 L4.5 0.5 L8.5 5.5 Z" fill="#e8e8f0"/></svg><svg style="left:1736px;top:1053px" width="17" height="15" viewBox="0 0 17 15"><path d="M1.5 1 V14.5" stroke="#fff" stroke-width="1.2"/><path d="M2 1.5 H9 L10 3 H15 L13.5 5.5 L15 8 H9.5 L8.5 6.5 H2 Z" fill="#fff"/></svg><svg style="left:1760px;top:1052px" width="18" height="17" viewBox="0 0 18 17"><circle cx="8.5" cy="8.5" r="6" fill="#d42a1a"/><path d="M1 2 L4 5 L7 2 M1 6 L4 9 L7 6 M1 10 L4 13 L7 10 M1 14 L4 17" stroke="#f2c20c" stroke-width="1.3" fill="none"/><path d="M10 5 L13 2 L16 5 M10 9 L13 6 L16 9 M10 13 L13 10 L16 13 M10 17 L13 14 L16 17" stroke="#8fe03a" stroke-width="1.3" fill="none"/><path d="M7 7 Q9 5 11 7 Q9 9 7 11" stroke="#eee" stroke-width="1.2" fill="none"/></svg><svg style="left:1785px;top:1053px" width="16" height="16" viewBox="0 0 16 16"><rect x="5" y="3.5" width="10" height="8" fill="#222" stroke="#ddd" stroke-width="1.2"/><path d="M10 11.5 V14 M6 14.5 H14" stroke="#ddd" stroke-width="1.2"/><path d="M2 1 V14 M0.5 1.5 H4 M0.5 4.5 H4" stroke="#ddd" stroke-width="1.1"/></svg><svg style="left:1808px;top:1054px" width="18" height="15" viewBox="0 0 18 15"><path d="M1 5 H4 L8.5 1 V14 L4 10 H1 Z" fill="#e0e0e0"/><path d="M11 5 Q12.5 7.5 11 10 M13.5 3 Q16.5 7.5 13.5 12" stroke="#ddd" stroke-width="1.2" fill="none"/></svg><div class="t" style="left:1850.5px;top:1047px;font-size:11.8px;color:#fff;letter-spacing:-0.5px">20:10</div><div class="t" style="left:1839px;top:1064.5px;font-size:11.8px;color:#fff;letter-spacing:-0.4px">17.9.2015</div><div class="a" style="left:1897px;top:1041px;width:23px;height:39px;border:1px solid #777;border-right:none;background:linear-gradient(160deg,#8a8a8a 0%,#555 35%,#2e2e2e 60%,#222 100%)"></div></div></body></html>
